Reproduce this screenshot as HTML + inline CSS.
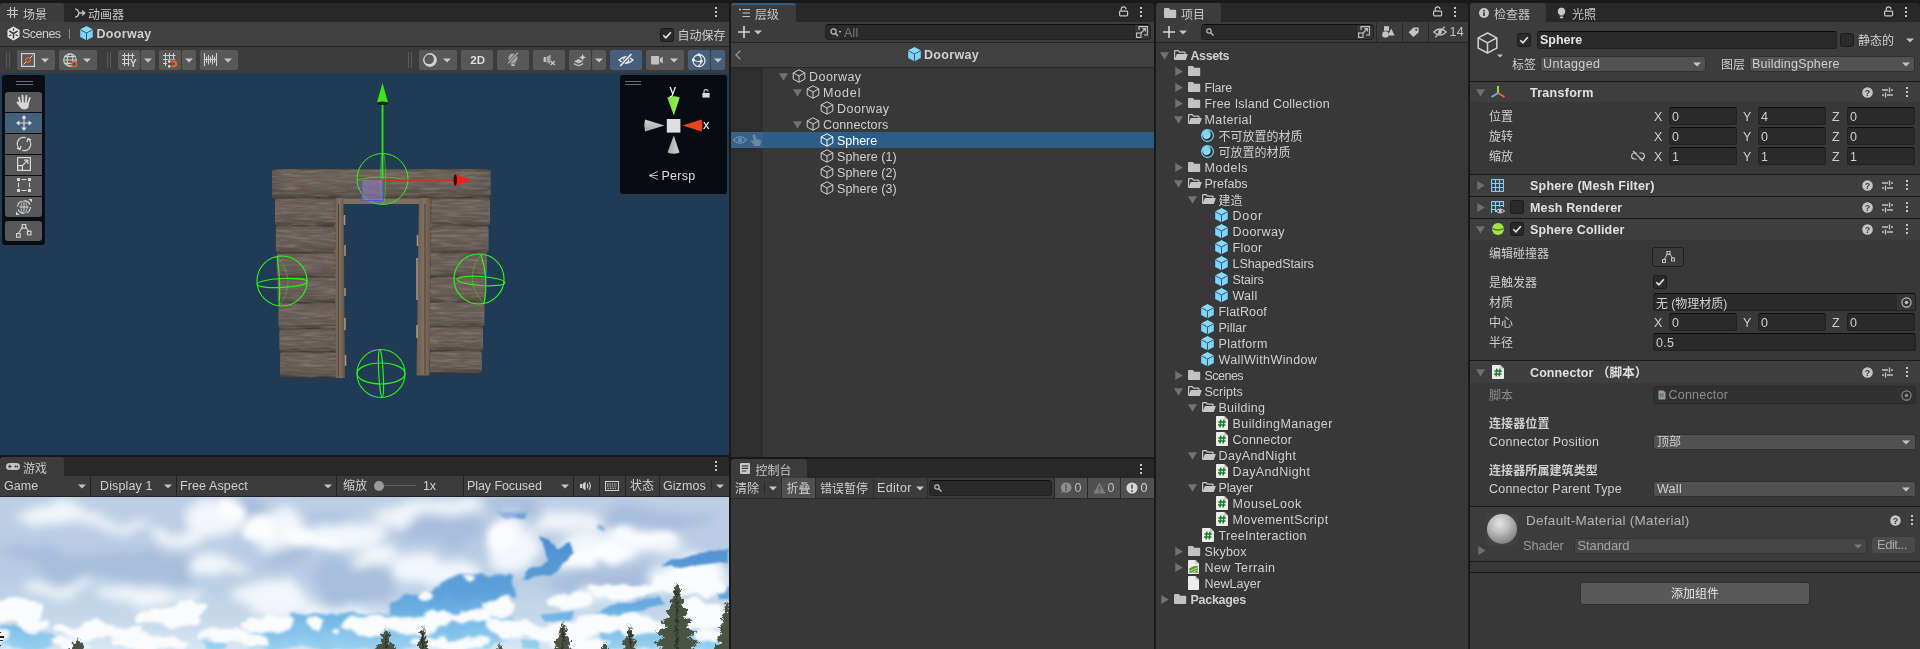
<!DOCTYPE html>
<html lang="zh"><head><meta charset="utf-8"><title>Unity</title>
<style>
*{box-sizing:border-box;margin:0;padding:0}
html,body{width:1920px;height:649px;overflow:hidden;background:#191919}
body{position:relative;font-family:"Liberation Sans","Noto Sans CJK SC",sans-serif;font-size:12.5px;letter-spacing:.25px;color:#cfcfcf;line-height:16px}
#root{position:absolute;left:0;top:0;width:1920px;height:649px;will-change:transform}
.a{position:absolute}
.t{position:absolute;white-space:nowrap;height:16px;line-height:16px}
.c{font-size:12px;letter-spacing:0}
.b{font-weight:bold;letter-spacing:.1px}
.dim{color:#8c8c8c}
svg{display:block;overflow:visible}
.fld{position:absolute;background:#2a2a2a;border:1px solid #212121;border-top-color:#0d0d0d;border-radius:3px}
.dd{position:absolute;background:#515151;border:1px solid #303030;border-radius:3px}
.btn{position:absolute;background:#585858;border-radius:2px}
.btn.on{background:#46607c}
</style></head><body>
<div id="root"><div class="a" style="left:0px;top:3px;width:729px;height:19px;background:#282828;border-radius:3px 3px 0 0"></div>
<div class="a" style="left:0px;top:3px;width:64px;height:19px;background:#3c3c3c;border-radius:3px 3px 0 0"></div>
<svg class="a" style="left:7px;top:7px" width="11" height="11" viewBox="0 0 11 11" ><g stroke="#c4c4c4" stroke-width="1.2"><path d="M3.5 0V11M7.5 0V11M0 3.5H11M0 7.5H11"/></g></svg>
<div class="t c" style="left:23px;top:6.5px;color:#c8c8c8;">场景</div>
<svg class="a" style="left:74px;top:8px" width="12" height="10" viewBox="0 0 12 10" ><g stroke="#c4c4c4" stroke-width="1.3" fill="none"><path d="M1 0.8Q4 1 5 5Q4 9 1 9.2M5 5H10.5M8 2.5L10.8 5L8 7.5"/></g></svg>
<div class="t c" style="left:88px;top:6.5px;color:#c8c8c8;">动画器</div>
<svg class="a" style="left:715px;top:6.5px" width="2" height="10" viewBox="0 0 2 10" ><rect x="0" y="0" width="2" height="2" fill="#c4c4c4"/><rect x="0" y="4" width="2" height="2" fill="#c4c4c4"/><rect x="0" y="8" width="2" height="2" fill="#c4c4c4"/></svg>
<div class="a" style="left:0px;top:22px;width:729px;height:24px;background:#404040"></div>
<div class="a" style="left:0px;top:46px;width:729px;height:1px;background:#232323"></div>
<svg class="a" style="left:7px;top:25.5px" width="13" height="15" viewBox="0 0 13 15" ><path d="M6.5 0.5L12.5 4V11L6.5 14.5L0.5 11V4Z" fill="#e6e6e6"/><path d="M6.5 7.5V12.5M6.5 7.5L2.3 5M6.5 7.5L10.7 5" stroke="#404040" stroke-width="1.6" fill="none"/><path d="M6.5 2.2V5M2 10L4.4 8.6M11 10L8.6 8.6" stroke="#404040" stroke-width="1.2"/></svg>
<div class="t " style="left:22px;top:26px;;letter-spacing:-0.52px;">Scenes</div>
<div class="a" style="left:69px;top:29px;width:1px;height:10px;background:#8a8a8a"></div>
<svg class="a" style="left:80px;top:25.8px" width="13.0" height="14.5" viewBox="0 0 13 14.5" ><path d="M6.5 0.2L12.8 3.6V10.9L6.5 14.3L0.2 10.9V3.6Z" fill="#7ad4fb"/><path d="M6.5 0.2L12.8 3.6L6.5 7L0.2 3.6Z" fill="#86dbfd"/><path d="M0.2 3.6L6.5 7L12.8 3.6M6.5 7V14.3" stroke="#35454f" stroke-width="0.9" fill="none"/></svg>
<div class="t b" style="left:96.5px;top:26px;;letter-spacing:0.32px;">Doorway</div>
<svg class="a" style="left:660px;top:28px" width="14" height="14" viewBox="0 0 14 14" ><rect x="0.5" y="0.5" width="13" height="13" rx="2" fill="#2a2a2a" stroke="#1b1b1b"/><path d="M3.3 7.2L5.9 9.8L10.8 4.2" fill="none" stroke="#e6e6e6" stroke-width="1.6"/></svg>
<div class="t c" style="left:677.5px;top:27.5px;;">自动保存</div>
<div class="a" style="left:0px;top:47px;width:729px;height:26px;background:#3c3c3c"></div>
<div class="a" style="left:6px;top:52px;width:1px;height:16px;background:#5a5a5a"></div>
<div class="a" style="left:9px;top:52px;width:1px;height:16px;background:#5a5a5a"></div>
<div class="a" style="left:107px;top:52px;width:1px;height:16px;background:#5a5a5a"></div>
<div class="a" style="left:110px;top:52px;width:1px;height:16px;background:#5a5a5a"></div>
<div class="a" style="left:408px;top:52px;width:1px;height:16px;background:#5a5a5a"></div>
<div class="a" style="left:411px;top:52px;width:1px;height:16px;background:#5a5a5a"></div>
<div class="btn" style="left:17px;top:50px;width:38px;height:20px"></div>
<div class="btn" style="left:59px;top:50px;width:38px;height:20px"></div>
<div class="btn" style="left:118px;top:50px;width:22px;height:20px"></div>
<div class="btn" style="left:141px;top:50px;width:14px;height:20px"></div>
<div class="btn" style="left:159px;top:50px;width:22px;height:20px"></div>
<div class="btn" style="left:182px;top:50px;width:14px;height:20px"></div>
<div class="btn" style="left:200px;top:50px;width:38px;height:20px"></div>
<div class="btn" style="left:419px;top:50px;width:38px;height:20px"></div>
<div class="btn" style="left:461px;top:50px;width:32px;height:20px"></div>
<div class="btn" style="left:497px;top:50px;width:32px;height:20px"></div>
<div class="btn" style="left:533px;top:50px;width:32px;height:20px"></div>
<div class="btn" style="left:569px;top:50px;width:22px;height:20px"></div>
<div class="btn" style="left:592px;top:50px;width:14px;height:20px"></div>
<div class="btn on" style="left:610px;top:50px;width:32px;height:20px"></div>
<div class="btn" style="left:646px;top:50px;width:38px;height:20px"></div>
<div class="btn on" style="left:688px;top:50px;width:22px;height:20px"></div>
<div class="btn on" style="left:711px;top:50px;width:14px;height:20px"></div>
<svg class="a" style="left:41px;top:58.0px" width="8" height="5" viewBox="0 0 8 5" ><path d="M0 0.5H8L4 4.5Z" fill="#c8c8c8"/></svg>
<svg class="a" style="left:83px;top:58.0px" width="8" height="5" viewBox="0 0 8 5" ><path d="M0 0.5H8L4 4.5Z" fill="#c8c8c8"/></svg>
<svg class="a" style="left:144px;top:58.0px" width="8" height="5" viewBox="0 0 8 5" ><path d="M0 0.5H8L4 4.5Z" fill="#c8c8c8"/></svg>
<svg class="a" style="left:185px;top:58.0px" width="8" height="5" viewBox="0 0 8 5" ><path d="M0 0.5H8L4 4.5Z" fill="#c8c8c8"/></svg>
<svg class="a" style="left:224px;top:58.0px" width="8" height="5" viewBox="0 0 8 5" ><path d="M0 0.5H8L4 4.5Z" fill="#c8c8c8"/></svg>
<svg class="a" style="left:443px;top:58.0px" width="8" height="5" viewBox="0 0 8 5" ><path d="M0 0.5H8L4 4.5Z" fill="#c8c8c8"/></svg>
<svg class="a" style="left:595px;top:58.0px" width="8" height="5" viewBox="0 0 8 5" ><path d="M0 0.5H8L4 4.5Z" fill="#c8c8c8"/></svg>
<svg class="a" style="left:670px;top:58.0px" width="8" height="5" viewBox="0 0 8 5" ><path d="M0 0.5H8L4 4.5Z" fill="#c8c8c8"/></svg>
<svg class="a" style="left:714px;top:58.0px" width="8" height="5" viewBox="0 0 8 5" ><path d="M0 0.5H8L4 4.5Z" fill="#c8c8c8"/></svg>
<svg class="a" style="left:21px;top:53px" width="14" height="14" viewBox="0 0 14 14" ><rect x="0.6" y="0.6" width="12.8" height="12.8" fill="none" stroke="#d0d0d0" stroke-width="1.2"/><path d="M2.5 11.5L11.5 2.5" stroke="#d0d0d0" stroke-width="1"/><circle cx="7" cy="7" r="2.3" fill="#585858" stroke="#f0632a" stroke-width="1.3"/></svg>
<svg class="a" style="left:63px;top:53px" width="15" height="15" viewBox="0 0 15 15" ><g fill="none" stroke="#d0d0d0" stroke-width="1.1"><circle cx="7" cy="7" r="6.3"/><ellipse cx="7" cy="7" rx="2.8" ry="6.3"/><path d="M0.7 7H13.3M1.6 3.6H12.4M1.6 10.4H12.4"/></g><circle cx="11.2" cy="11.2" r="2.5" fill="#585858" stroke="#f0632a" stroke-width="1.3"/></svg>
<svg class="a" style="left:121px;top:52px" width="16" height="16" viewBox="0 0 16 16" ><g stroke="#d0d0d0" stroke-width="1" fill="none"><path d="M3.5 1V14M7.5 1V14M11.5 1V8M1 3.5H13.5M1 7.5H13.5M1 11.5H9"/></g><rect x="8.6" y="6.9" width="7" height="8.6" fill="#585858"/><text x="8.7" y="15" font-size="10.5" font-weight="bold" fill="#d0d0d0" font-family="Liberation Sans,sans-serif" letter-spacing="0">Y</text></svg>
<svg class="a" style="left:162px;top:52px" width="16" height="16" viewBox="0 0 16 16" ><g stroke="#d0d0d0" stroke-width="1" fill="none"><path d="M3.5 1V14M7.5 1V8M11.5 1V8M1 3.5H13.5M1 7.5H13.5M1 11.5H5"/></g><rect x="5.4" y="7.6" width="10.6" height="8.4" fill="#585858"/><path d="M9.4 9.5H11.8A2.3 2.3 0 0 1 11.8 14.3H9.4" fill="none" stroke="#f0632a" stroke-width="1.9"/><rect x="6.2" y="8.4" width="2.1" height="2.1" fill="#fff"/><rect x="6.2" y="13.3" width="2.1" height="2.1" fill="#fff"/></svg>
<svg class="a" style="left:204px;top:53px" width="13" height="13" viewBox="0 0 13 13" ><g stroke="#d0d0d0" stroke-width="1.1"><path d="M0.5 0V13M12.5 0V13M0.5 6.5H12.5M2.5 3.5V9.8M4.5 2V11.5M6.5 3.5V9.8M8.5 2V11.5M10.5 3.5V9.8"/></g></svg>
<svg class="a" style="left:423px;top:53px" width="14" height="14" viewBox="0 0 14 14" ><path fill-rule="evenodd" d="M7 0.3A6.7 6.7 0 1 1 6.99 0.3ZM6 1.3A4.9 4.9 0 1 0 6.01 1.3Z" fill="#d0d0d0"/><circle cx="7" cy="7" r="6.2" fill="none" stroke="#d0d0d0" stroke-width="1"/></svg>
<div class="t b" style="left:470.3px;top:52.3px;font-size:11.5px;letter-spacing:0;color:#dcdcdc;">2D</div>
<svg class="a" style="left:506px;top:52px" width="14" height="16" viewBox="0 0 14 16" ><circle cx="7" cy="6" r="4.6" fill="#a2a2a2"/><path d="M4.6 9H9.4V11.6H4.6Z" fill="#a2a2a2"/><rect x="5" y="12.2" width="4" height="1.7" rx="0.8" fill="#bdbdbd"/><path d="M11.6 1L2.2 11.2" stroke="#585858" stroke-width="2.6"/><path d="M11.8 0.8L2 11.4" stroke="#b8b8b8" stroke-width="1.1"/></svg>
<svg class="a" style="left:543px;top:54px" width="13" height="12" viewBox="0 0 13 12" ><rect x="0.6" y="3" width="2.3" height="5" fill="#c4c4c4"/><path d="M3.6 3L7.6 0.4V10.6L3.6 8Z" fill="#a8a8a8"/><path d="M7 6.4H13V11.6H7Z" fill="#585858"/><path d="M7.6 7L11.8 11M11.8 7L7.6 11" stroke="#c8c8c8" stroke-width="1.3"/></svg>
<svg class="a" style="left:573px;top:53px" width="14" height="14" viewBox="0 0 14 14" ><path d="M1 8.2L5.6 6L10.2 8.2L5.6 10.4Z" fill="#c0c0c0"/><path d="M1 10.6L5.6 12.8L10.2 10.6" fill="none" stroke="#c0c0c0" stroke-width="1.3"/><path d="M9.6 0.2L10.8 3.2L13.8 4.4L10.8 5.6L9.6 8.6L8.4 5.6L5.4 4.4L8.4 3.2Z" fill="#d0d0d0" stroke="#585858" stroke-width="0.6"/></svg>
<svg class="a" style="left:618px;top:53px" width="16" height="14" viewBox="0 0 16 14" ><path d="M1 7Q8 0.4 15 7Q8 13.6 1 7Z" fill="none" stroke="#f0f0f0" stroke-width="1.3"/><path d="M10.2 5.6A2.6 2.6 0 1 1 6.6 4.9" fill="none" stroke="#f0f0f0" stroke-width="1.2"/><path d="M2.4 12.8L13.2 1.2" stroke="#46607c" stroke-width="3.4"/><path d="M2.2 13L13.4 1" stroke="#f0f0f0" stroke-width="1.5"/></svg>
<svg class="a" style="left:651px;top:56px" width="13" height="9" viewBox="0 0 13 9" ><rect x="0" y="0" width="8.2" height="8.4" rx="0.8" fill="#c0c0c0"/><path d="M9 2.6L11.8 0.8V7.6L9 5.8Z" fill="#c0c0c0"/></svg>
<svg class="a" style="left:692px;top:53px" width="14" height="15" viewBox="0 0 14 15" ><g fill="none" stroke="#f0f0f0" stroke-width="1.2"><circle cx="7" cy="7.6" r="6"/><path d="M7 1.6Q9.6 4 9.4 8M1.2 6.8Q5 9.4 9.4 8M9.4 8Q9 11.4 6 13.4"/></g><circle cx="7" cy="1.8" r="1.5" fill="#f0f0f0"/><circle cx="9.4" cy="8" r="1.5" fill="#f0f0f0"/><circle cx="1.4" cy="6.8" r="1.5" fill="#f0f0f0"/></svg>
<div class="a" style="left:0px;top:73px;width:729px;height:382px;background:#223b54"></div>
<svg class="a" style="left:0;top:73px" width="729" height="382" viewBox="0 73 729 382"><defs>
<linearGradient id="lg" x1="0" y1="0" x2="0" y2="1"><stop offset="0" stop-color="#51463f"/><stop offset="0.07" stop-color="#776a62"/><stop offset="0.45" stop-color="#7b6f67"/><stop offset="0.8" stop-color="#6d625b"/><stop offset="0.95" stop-color="#564b45"/><stop offset="1" stop-color="#3e3530"/></linearGradient>
<linearGradient id="lg2" x1="0" y1="0" x2="0" y2="1"><stop offset="0" stop-color="#5a4f47"/><stop offset="0.1" stop-color="#7d7168"/><stop offset="0.5" stop-color="#786c64"/><stop offset="0.85" stop-color="#665b54"/><stop offset="1" stop-color="#443b35"/></linearGradient>
<linearGradient id="post" x1="0" y1="0" x2="1" y2="0"><stop offset="0" stop-color="#6e5e50"/><stop offset="0.5" stop-color="#80705f"/><stop offset="1" stop-color="#625446"/></linearGradient>
<linearGradient id="sh" x1="0" y1="0" x2="1" y2="0"><stop offset="0" stop-color="#000" stop-opacity="0.12"/><stop offset="0.08" stop-color="#000" stop-opacity="0"/><stop offset="0.92" stop-color="#000" stop-opacity="0"/><stop offset="1" stop-color="#000" stop-opacity="0.15"/></linearGradient>
<filter id="wood" x="0" y="0" width="100%" height="100%"><feTurbulence type="fractalNoise" baseFrequency="0.035 0.55" numOctaves="3" seed="11" result="n"/><feColorMatrix in="n" type="matrix" values="0 0 0 0 0.12  0 0 0 0 0.1  0 0 0 0 0.09  1.3 0 0 0 -0.5" result="d"/><feComposite in="d" in2="SourceGraphic" operator="in"/></filter>
<filter id="wood2" x="0" y="0" width="100%" height="100%"><feTurbulence type="fractalNoise" baseFrequency="0.05 0.4" numOctaves="2" seed="23" result="n"/><feColorMatrix in="n" type="matrix" values="0 0 0 0 0.75  0 0 0 0 0.7  0 0 0 0 0.64  0 1.5 0 0 -0.6" result="d"/><feComposite in="d" in2="SourceGraphic" operator="in"/></filter>
</defs><rect x="272" y="169" width="218.5" height="29.5" rx="3.5" fill="url(#lg2)"/><rect x="272" y="169" width="218.5" height="29.5" rx="3.5" fill="url(#sh)"/><rect x="275.0" y="198" width="61.0" height="28" rx="3" fill="url(#lg)"/><rect x="275.9" y="226" width="60.1" height="27" rx="3" fill="url(#lg)"/><rect x="276.8" y="253" width="59.2" height="24" rx="3" fill="url(#lg)"/><rect x="277.6" y="277" width="58.4" height="26" rx="3" fill="url(#lg)"/><rect x="278.5" y="303" width="57.5" height="26" rx="3" fill="url(#lg)"/><rect x="279.4" y="329" width="56.6" height="23" rx="3" fill="url(#lg)"/><rect x="280.2" y="352" width="55.8" height="25.5" rx="3" fill="url(#lg)"/><rect x="430" y="198" width="60.0" height="28" rx="3" fill="url(#lg)"/><rect x="430" y="226" width="58.5" height="27" rx="3" fill="url(#lg)"/><rect x="430" y="253" width="57.0" height="24" rx="3" fill="url(#lg)"/><rect x="430" y="277" width="55.7" height="25" rx="3" fill="url(#lg)"/><rect x="430" y="302" width="54.4" height="25" rx="3" fill="url(#lg)"/><rect x="430" y="327" width="53.0" height="24" rx="3" fill="url(#lg)"/><rect x="430" y="351" width="51.7" height="22" rx="3" fill="url(#lg)"/><rect x="334" y="197" width="98" height="7" fill="#7d6f62"/><rect x="334" y="197" width="98" height="1.5" fill="#4a4039"/><path d="M334 198H343.5L345 378H335.5Z" fill="url(#post)"/><path d="M419 198H432L429.5 375.5H416.5Z" fill="url(#post)"/><path d="M338.5 204V377M425 204V375" stroke="#4d4239" stroke-width="1"/><path d="M344.5 215V225M345 245V256M345 288V296M345 318V330M345.5 355V366M417.5 235V246M417 258V300M417 325V338" stroke="#c9a98a" stroke-width="1.6" opacity="0.8"/><g fill="#2a1c12" opacity="0.2"><path d="M272 169H490.5V198.5H490L480.5 373H430V198H336V377.5H281L275 198.5H272Z"/></g><g filter="url(#wood)" fill="#000"><path d="M272 169H490.5V198.5H490L480.5 373H430V198H336V377.5H281L275 198.5H272Z"/></g><g filter="url(#wood2)" fill="#000" opacity="0.3"><path d="M272 169H490.5V198.5H490L480.5 373H430V198H336V377.5H281L275 198.5H272Z"/></g><circle cx="382.5" cy="179" r="25.5" fill="none" stroke="#2cf21c" stroke-width="1"/><path d="M357 180Q382 174 408 180" fill="none" stroke="#2cf21c" stroke-width="0.9" opacity="0.8"/><ellipse cx="383" cy="179" rx="2.6" ry="25.5" fill="none" stroke="#2cf21c" stroke-width="0.8" opacity="0.7"/><rect x="362" y="179.5" width="21" height="21" fill="#8a7fc0" fill-opacity="0.6" stroke="#4b55e0" stroke-width="0.9"/><path d="M382.5 179V102" stroke="#35e61e" stroke-width="1.8"/><path d="M382.5 83L388.2 103H376.8Z" fill="#3fe51c"/><ellipse cx="382.5" cy="103.2" rx="5.8" ry="1.8" fill="#0c2a08"/><path d="M383 180H456" stroke="#e8281c" stroke-width="1.6"/><path d="M471 180L455.5 174.2V185.8Z" fill="#f2210f"/><ellipse cx="455.3" cy="180" rx="1.7" ry="5.8" fill="#3a0a06"/><circle cx="282" cy="281" r="25" fill="none" stroke="#2cf21c" stroke-width="1.1"/><ellipse cx="282" cy="283" rx="25" ry="4.5" fill="none" stroke="#2cf21c" stroke-width="1.2" transform="rotate(-3 282 283)"/><path d="M277 256.5Q281 281 279 306" fill="none" stroke="#2cf21c" stroke-width="1.2"/><path d="M277 256.5Q298 281 279 306" fill="none" stroke="#2cf21c" stroke-width="0.7" opacity="0.6"/><circle cx="479" cy="279" r="25" fill="none" stroke="#2cf21c" stroke-width="1.2"/><ellipse cx="481" cy="281" rx="24" ry="4.5" fill="none" stroke="#2cf21c" stroke-width="1.2" transform="rotate(4 481 281)"/><path d="M481 254.5Q489 279 484 304" fill="none" stroke="#2cf21c" stroke-width="1.2"/><path d="M481 254.5Q462 279 484 304" fill="none" stroke="#2cf21c" stroke-width="0.7" opacity="0.6"/><circle cx="381" cy="373.5" r="24" fill="none" stroke="#2cf21c" stroke-width="1.1"/><ellipse cx="381" cy="373.5" rx="24" ry="10.5" fill="none" stroke="#2cf21c" stroke-width="1.2"/><ellipse cx="381" cy="373.5" rx="2.2" ry="24" fill="none" stroke="#2cf21c" stroke-width="1.1" transform="rotate(-3 381 373.5)"/></svg>
<div class="a" style="left:2px;top:75px;width:43px;height:170px;background:#0a0d13;border-radius:3px"></div>
<div class="a" style="left:16px;top:81px;width:17px;height:1px;background:#6a6a6a"></div>
<div class="a" style="left:16px;top:84px;width:17px;height:1px;background:#6a6a6a"></div>
<div class="a" style="left:5px;top:92px;width:37px;height:20px;background:#585858;border-radius:3px 3px 0 0"></div>
<div class="a" style="left:5px;top:113px;width:37px;height:20px;background:#46607c;border-radius:0"></div>
<div class="a" style="left:5px;top:134px;width:37px;height:20px;background:#585858;border-radius:0"></div>
<div class="a" style="left:5px;top:155px;width:37px;height:20px;background:#585858;border-radius:0"></div>
<div class="a" style="left:5px;top:176px;width:37px;height:20px;background:#585858;border-radius:0"></div>
<div class="a" style="left:5px;top:197px;width:37px;height:20px;background:#585858;border-radius:0 0 3px 3px"></div>
<div class="a" style="left:5px;top:221px;width:37px;height:20px;background:#585858;border-radius:3px"></div>
<svg class="a" style="left:16px;top:94px" width="15" height="16" viewBox="0 0 15 16" ><g fill="#d6d6d6"><rect x="3.6" y="2.6" width="1.9" height="8" rx="0.95" transform="rotate(-14 4.6 10)"/><rect x="6.1" y="0.8" width="1.9" height="9.4" rx="0.95" transform="rotate(-4 7 10)"/><rect x="8.6" y="1" width="1.9" height="9.4" rx="0.95" transform="rotate(6 9.5 10)"/><rect x="11" y="2.8" width="1.8" height="7.6" rx="0.9" transform="rotate(17 11.9 10)"/><path d="M3.8 8.4H12.8V10.8Q12.8 15.4 8.4 15.4Q5.6 15.4 4.3 13.4L0.7 8.9Q0.2 7.9 1.2 7.4Q2.1 7.1 2.8 7.9L3.8 9.2Z"/></g></svg>
<svg class="a" style="left:16px;top:115px" width="16" height="16" viewBox="0 0 16 16" ><g stroke="#d6d6d6" stroke-width="1.2" fill="none"><path d="M8 2V14M2 8H14"/></g><path d="M8 0L10.6 3.4H5.4ZM8 16L10.6 12.6H5.4ZM0 8L3.4 5.4V10.6ZM16 8L12.6 5.4V10.6Z" fill="#dfe6ee"/></svg>
<svg class="a" style="left:16px;top:136px" width="16" height="16" viewBox="0 0 16 16" ><g stroke="#d6d6d6" stroke-width="1.25" fill="none"><path d="M9.6 1.7A6.4 6.4 0 0 0 3.8 12.9M6.4 14.3A6.4 6.4 0 0 0 12.2 3.1"/><path d="M0.9 12.2L4.1 13.4L5 10M15.1 3.8L11.9 2.6L11 6"/></g></svg>
<svg class="a" style="left:17px;top:157px" width="14" height="14" viewBox="0 0 14 14" ><g stroke="#d6d6d6" stroke-width="1.2" fill="none"><rect x="0.6" y="0.6" width="12.8" height="12.8"/><rect x="0.6" y="8.6" width="4.8" height="4.8"/><path d="M5.5 8.5L10.8 3.2M7 3.2H10.8V7"/></g></svg>
<svg class="a" style="left:17px;top:178px" width="14" height="14" viewBox="0 0 14 14" ><g stroke="#d6d6d6" stroke-width="1.1" fill="none"><path d="M4.5 1.5H9.5M4.5 12.5H9.5M1.5 4.5V9.5M12.5 4.5V9.5"/></g><g fill="#d6d6d6"><rect x="0" y="0" width="3" height="3"/><rect x="11" y="0" width="3" height="3"/><rect x="0" y="11" width="3" height="3"/><rect x="11" y="11" width="3" height="3"/></g></svg>
<svg class="a" style="left:16px;top:199px" width="16" height="16" viewBox="0 0 16 16" ><g stroke="#d6d6d6" stroke-width="1.1" fill="none"><circle cx="8" cy="8" r="6.4" stroke-dasharray="7 3"/><path d="M8 3.5V12.5M3.5 8H12.5"/><ellipse cx="8" cy="8" rx="3" ry="6.2" stroke-width="0.8"/></g><path d="M16 0V3.6L12.4 0ZM0 16V12.4L3.6 16Z" fill="#d6d6d6"/></svg>
<svg class="a" style="left:16px;top:224px" width="16" height="14" viewBox="0 0 16 14" ><g stroke="#d6d6d6" stroke-width="1.1" fill="none"><path d="M2.4 9.5L6.6 2.8M9.4 2.8L13.2 8"/><rect x="6.2" y="0.6" width="3.6" height="3.6"/><rect x="0.6" y="9.6" width="3.6" height="3.6"/><rect x="11.4" y="7.2" width="3.6" height="3.6"/></g></svg>
<div class="a" style="left:620px;top:75px;width:107px;height:119px;background:#080b12;border-radius:3px"></div>
<div class="a" style="left:625px;top:81px;width:16px;height:1px;background:#6a6a6a"></div>
<div class="a" style="left:625px;top:84px;width:16px;height:1px;background:#6a6a6a"></div>
<svg class="a" style="left:0;top:73px" width="729" height="382" viewBox="0 73 729 382"><defs><linearGradient id="cg" x1="0" y1="0" x2="1" y2="0"><stop offset="0" stop-color="#7ee03a"/><stop offset="1" stop-color="#9aee5a"/></linearGradient><linearGradient id="cgy" x1="0" y1="0" x2="1" y2="0"><stop offset="0" stop-color="#a8a8a8"/><stop offset="1" stop-color="#d0d0d0"/></linearGradient><linearGradient id="cgx" x1="0" y1="0" x2="0" y2="1"><stop offset="0" stop-color="#d0d0d0"/><stop offset="1" stop-color="#a8a8a8"/></linearGradient></defs><path d="M667.3 97.5Q673.5 95 679.7 97.5L673.8 115.5Z" fill="url(#cg)"/><path d="M667.5 152.5Q673.5 155 679.5 152.5L673.8 135.5Z" fill="url(#cgy)"/><path d="M645 119.6Q643.5 125.5 645 131.4L664.5 125.6Z" fill="url(#cgx)"/><path d="M701.5 119.6Q703.5 125.5 701.5 131.4L682.5 125.6Z" fill="#e8431f"/><rect x="666.8" y="119" width="13.6" height="13.6" fill="#dedede"/><path d="M649 175.5L658 171.5M649 175.5L658 179.5M649 175.5H658" stroke="#c8c8c8" stroke-width="0.9" fill="none"/></svg>
<div class="t " style="left:669.5px;top:81.5px;color:#fff;font-size:13px;">y</div>
<div class="t " style="left:703px;top:116.5px;color:#fff;font-size:13px;">x</div>
<div class="t " style="left:661.5px;top:168px;color:#dcdcdc;">Persp</div>
<svg class="a" style="left:702px;top:89px" width="8" height="9" viewBox="0 0 8 9" ><path d="M2 4V2.6Q2 0.6 4 0.6Q6 0.6 6 2.6" fill="none" stroke="#d0d0d0" stroke-width="1.1"/><rect x="0.4" y="4" width="7.2" height="4.6" fill="#d8d8d8"/></svg>
<div class="a" style="left:0px;top:457px;width:729px;height:19px;background:#282828;border-radius:3px 3px 0 0"></div>
<div class="a" style="left:0px;top:457px;width:64px;height:19px;background:#3c3c3c;border-radius:3px 3px 0 0"></div>
<svg class="a" style="left:6px;top:462px" width="14" height="9" viewBox="0 0 14 9" ><rect x="0" y="1" width="14" height="7" rx="3.5" fill="#c4c4c4"/><path d="M3.8 2.8V6.2M2.1 4.5H5.5" stroke="#3c3c3c" stroke-width="1.1"/><circle cx="9.3" cy="4.5" r="0.9" fill="#3c3c3c"/><circle cx="11.3" cy="4.5" r="0.9" fill="#3c3c3c"/></svg>
<div class="t c" style="left:23px;top:460.5px;color:#c8c8c8;">游戏</div>
<svg class="a" style="left:715px;top:460.5px" width="2" height="10" viewBox="0 0 2 10" ><rect x="0" y="0" width="2" height="2" fill="#c4c4c4"/><rect x="0" y="4" width="2" height="2" fill="#c4c4c4"/><rect x="0" y="8" width="2" height="2" fill="#c4c4c4"/></svg>
<div class="a" style="left:0px;top:476px;width:729px;height:20px;background:#3c3c3c"></div>
<div class="a" style="left:0px;top:496px;width:729px;height:1px;background:#1f1f1f"></div>
<div class="a" style="left:90px;top:476px;width:1px;height:20px;background:#242424"></div>
<div class="a" style="left:176px;top:476px;width:1px;height:20px;background:#242424"></div>
<div class="a" style="left:336px;top:476px;width:1px;height:20px;background:#242424"></div>
<div class="a" style="left:463px;top:476px;width:1px;height:20px;background:#242424"></div>
<div class="a" style="left:573px;top:476px;width:1px;height:20px;background:#242424"></div>
<div class="a" style="left:599px;top:476px;width:1px;height:20px;background:#242424"></div>
<div class="a" style="left:625px;top:476px;width:1px;height:20px;background:#242424"></div>
<div class="a" style="left:659px;top:476px;width:1px;height:20px;background:#242424"></div>
<div class="a" style="left:711px;top:480px;width:1px;height:12px;background:#2a2a2a"></div>
<div class="t " style="left:4px;top:477.5px;;letter-spacing:0.05px;">Game</div>
<svg class="a" style="left:78px;top:483.5px" width="8" height="5" viewBox="0 0 8 5" ><path d="M0 0.5H8L4 4.5Z" fill="#c4c4c4"/></svg>
<div class="t " style="left:100px;top:477.5px;;letter-spacing:0.12px;">Display 1</div>
<svg class="a" style="left:164px;top:483.5px" width="8" height="5" viewBox="0 0 8 5" ><path d="M0 0.5H8L4 4.5Z" fill="#c4c4c4"/></svg>
<div class="t " style="left:180px;top:477.5px;;letter-spacing:0.11px;">Free Aspect</div>
<svg class="a" style="left:324px;top:483.5px" width="8" height="5" viewBox="0 0 8 5" ><path d="M0 0.5H8L4 4.5Z" fill="#c4c4c4"/></svg>
<div class="t c" style="left:343px;top:478px;;">缩放</div>
<div class="a" style="left:378px;top:484.5px;width:38px;height:1px;background:#5e5e5e"></div>
<div class="a" style="left:373.5px;top:481px;width:10px;height:10px;background:#999;border-radius:5px"></div>
<div class="t " style="left:423px;top:477.5px;;letter-spacing:-0.10px;">1x</div>
<div class="t " style="left:467px;top:477.5px;;letter-spacing:-0.08px;">Play Focused</div>
<svg class="a" style="left:561px;top:483.5px" width="8" height="5" viewBox="0 0 8 5" ><path d="M0 0.5H8L4 4.5Z" fill="#c4c4c4"/></svg>
<svg class="a" style="left:580px;top:481px" width="12" height="10" viewBox="0 0 12 10" ><path d="M0 3H2V7H0ZM2.6 3L5.6 0.6V9.4L2.6 7Z" fill="#d0d0d0"/><path d="M7.2 2.6Q8.6 5 7.2 7.4M9 1Q11.6 5 9 9" stroke="#d0d0d0" stroke-width="1.1" fill="none"/></svg>
<svg class="a" style="left:605px;top:481px" width="14" height="10" viewBox="0 0 14 10" ><rect x="0.5" y="0.5" width="13" height="9" fill="none" stroke="#d0d0d0"/><path d="M2 3H12M2 5H12M2.5 7.2H11.5" stroke="#d0d0d0" stroke-width="1.1" stroke-dasharray="1.4 1"/></svg>
<div class="t c" style="left:630px;top:478px;;">状态</div>
<div class="t " style="left:663px;top:477.5px;;letter-spacing:0.06px;">Gizmos</div>
<svg class="a" style="left:716px;top:483.5px" width="8" height="5" viewBox="0 0 8 5" ><path d="M0 0.5H8L4 4.5Z" fill="#c4c4c4"/></svg>
<svg class="a" style="left:0;top:497px" width="729" height="152" viewBox="0 0 729 152"><defs>
<linearGradient id="skyb" x1="0" y1="0" x2="0" y2="1"><stop offset="0" stop-color="#bdcee4"/><stop offset="0.5" stop-color="#b6cbe3"/><stop offset="0.8" stop-color="#c6d9eb"/><stop offset="1" stop-color="#d6e6f3"/></linearGradient>
<linearGradient id="blu" gradientUnits="userSpaceOnUse" x1="0" y1="0" x2="0" y2="152"><stop offset="0" stop-color="#6f9fd2"/><stop offset="0.3" stop-color="#4f8fce"/><stop offset="0.65" stop-color="#5ea3dc"/><stop offset="0.85" stop-color="#7cbde8"/><stop offset="1" stop-color="#9ad2f0"/></linearGradient>
<filter id="b1" x="-20%" y="-20%" width="140%" height="140%"><feTurbulence type="fractalNoise" baseFrequency="0.06" numOctaves="2" seed="4" result="n"/><feDisplacementMap in="SourceGraphic" in2="n" scale="7" xChannelSelector="R" yChannelSelector="G"/><feGaussianBlur stdDeviation="1"/></filter>
<filter id="b2" x="-20%" y="-30%" width="140%" height="160%"><feTurbulence type="fractalNoise" baseFrequency="0.045" numOctaves="3" seed="9" result="n"/><feDisplacementMap in="SourceGraphic" in2="n" scale="16" xChannelSelector="R" yChannelSelector="G"/><feGaussianBlur stdDeviation="1.8"/></filter>
<filter id="b4" x="-20%" y="-30%" width="140%" height="160%"><feTurbulence type="fractalNoise" baseFrequency="0.03" numOctaves="3" seed="2" result="n"/><feDisplacementMap in="SourceGraphic" in2="n" scale="22" xChannelSelector="R" yChannelSelector="G"/><feGaussianBlur stdDeviation="3.5"/></filter>
<filter id="b8" x="-20%" y="-40%" width="140%" height="180%"><feTurbulence type="fractalNoise" baseFrequency="0.025" numOctaves="3" seed="5" result="n"/><feDisplacementMap in="SourceGraphic" in2="n" scale="30" xChannelSelector="R" yChannelSelector="G"/><feGaussianBlur stdDeviation="5.5"/></filter>
<filter id="tr" x="-20%" y="-20%" width="140%" height="140%"><feTurbulence type="fractalNoise" baseFrequency="0.35" numOctaves="2" seed="3" result="n"/><feDisplacementMap in="SourceGraphic" in2="n" scale="7" xChannelSelector="R" yChannelSelector="G"/></filter><clipPath id="skc"><rect x="0" y="0" width="729" height="152"/></clipPath>
</defs><g clip-path="url(#skc)"><rect width="729" height="152" fill="url(#skyb)"/><g filter="url(#b8)" fill="#a7bedc"><ellipse cx="130" cy="72" rx="100" ry="12"/><ellipse cx="40" cy="60" rx="40" ry="9"/><ellipse cx="250" cy="12" rx="12" ry="14"/><ellipse cx="290" cy="62" rx="20" ry="10"/><ellipse cx="352" cy="84" rx="38" ry="22"/><ellipse cx="440" cy="34" rx="46" ry="11"/><ellipse cx="508" cy="8" rx="24" ry="9"/><ellipse cx="650" cy="20" rx="70" ry="9"/><ellipse cx="620" cy="88" rx="70" ry="16"/><ellipse cx="335" cy="20" rx="22" ry="7"/></g><g filter="url(#b8)" fill="#f3f7fb"><ellipse cx="65" cy="18" rx="45" ry="9"/><ellipse cx="215" cy="22" rx="30" ry="22"/><ellipse cx="278" cy="30" rx="26" ry="22"/><ellipse cx="345" cy="40" rx="48" ry="13"/><ellipse cx="450" cy="12" rx="38" ry="9"/><ellipse cx="270" cy="100" rx="32" ry="18"/><ellipse cx="435" cy="74" rx="50" ry="16"/><ellipse cx="372" cy="62" rx="18" ry="9"/><ellipse cx="515" cy="48" rx="24" ry="26"/><ellipse cx="620" cy="48" rx="62" ry="14"/><ellipse cx="690" cy="80" rx="36" ry="18"/><ellipse cx="570" cy="22" rx="40" ry="12"/><ellipse cx="600" cy="100" rx="30" ry="6"/><ellipse cx="330" cy="118" rx="60" ry="8"/><ellipse cx="180" cy="40" rx="30" ry="8"/><ellipse cx="120" cy="30" rx="30" ry="6"/><ellipse cx="215" cy="70" rx="30" ry="10"/><ellipse cx="150" cy="100" rx="50" ry="8"/><ellipse cx="60" cy="90" rx="40" ry="6"/><ellipse cx="400" cy="20" rx="25" ry="10"/></g><g filter="url(#b4)" fill="#fbfcfe"><ellipse cx="640" cy="40" rx="40" ry="7"/><ellipse cx="600" cy="56" rx="36" ry="8"/><ellipse cx="575" cy="68" rx="22" ry="7"/><ellipse cx="500" cy="40" rx="14" ry="16"/><ellipse cx="260" cy="30" rx="14" ry="12"/><ellipse cx="300" cy="40" rx="16" ry="8"/><ellipse cx="690" cy="76" rx="28" ry="10"/><ellipse cx="230" cy="15" rx="12" ry="10"/><ellipse cx="330" cy="45" rx="20" ry="6"/></g><g filter="url(#b2)" fill="url(#blu)"><path d="M392 104L410 99L428 96L440 86L456 81L486 77L514 78L514 97L500 101L490 118L512 122L512 140L490 152H250L248 136L285 128L290 119L345 117L392 119Z"/><path d="M0 126L30 134L52 140L60 152H0Z"/><path d="M118 146L135 144L140 152H120Z"/><path d="M205 147L222 144L226 152H208Z"/></g><g filter="url(#b1)" fill="url(#blu)"><path d="M540 39L548 42L556 52L570 45L572 58L561 70L546 78L523 83L528 74L548 64L544 50Z"/><path d="M660 68L690 58L729 50V64L700 68L680 72Z"/><path d="M594 118L620 106L660 100L665 108L640 113L612 121Z"/><path d="M540 118L575 114L572 123L545 126Z"/><path d="M716 94L729 90V102L720 102Z"/><path d="M520 144L540 142L542 152H522Z"/><path d="M600 134L660 130L729 134V152H600Z"/></g><g filter="url(#b2)"><ellipse cx="512" cy="16" rx="15" ry="5" fill="#90b2da"/><ellipse cx="519" cy="18" rx="6" ry="2.5" fill="#5f95d0"/><ellipse cx="601" cy="32" rx="5" ry="2" fill="#86aedb"/></g><g filter="url(#b2)" fill="#f9fbfd"><ellipse cx="14" cy="113" rx="30" ry="12"/><ellipse cx="34" cy="126" rx="18" ry="7"/><ellipse cx="2" cy="141" rx="7" ry="9"/><ellipse cx="100" cy="134" rx="46" ry="8"/><ellipse cx="150" cy="146" rx="40" ry="8"/><ellipse cx="70" cy="148" rx="20" ry="6"/><ellipse cx="168" cy="120" rx="32" ry="10"/><ellipse cx="192" cy="112" rx="18" ry="8"/><ellipse cx="226" cy="139" rx="26" ry="8"/><ellipse cx="140" cy="142" rx="18" ry="5"/><ellipse cx="268" cy="127" rx="28" ry="8"/><ellipse cx="252" cy="143" rx="20" ry="7"/><ellipse cx="316" cy="127" rx="7" ry="6"/><ellipse cx="338" cy="134" rx="5" ry="4"/><ellipse cx="370" cy="128" rx="26" ry="9"/><ellipse cx="410" cy="128" rx="28" ry="10"/><ellipse cx="440" cy="121" rx="14" ry="8"/><ellipse cx="424" cy="99" rx="8" ry="5"/><ellipse cx="468" cy="83" rx="8" ry="3"/><ellipse cx="500" cy="110" rx="17" ry="10"/><ellipse cx="498" cy="128" rx="12" ry="7"/><ellipse cx="470" cy="120" rx="22" ry="6"/><ellipse cx="450" cy="146" rx="40" ry="7"/><ellipse cx="560" cy="135" rx="40" ry="9"/><ellipse cx="600" cy="127" rx="28" ry="8"/><ellipse cx="640" cy="128" rx="28" ry="10"/><ellipse cx="700" cy="118" rx="30" ry="14"/><ellipse cx="520" cy="134" rx="20" ry="8"/><ellipse cx="690" cy="88" rx="34" ry="12"/><ellipse cx="628" cy="94" rx="40" ry="7"/><ellipse cx="572" cy="103" rx="24" ry="9"/><ellipse cx="712" cy="140" rx="20" ry="8"/><ellipse cx="580" cy="148" rx="30" ry="6"/></g><g filter="url(#tr)"><path d="M677.0 85.0L677.6 88.0L680.2 93.2L679.6 98.5L684.3 103.7L681.7 108.9L688.4 114.2L683.7 119.4L692.5 124.6L685.8 129.8L696.6 135.1L687.8 140.3L700.6 145.5L689.8 150.8L704.7 156.0L647.8 156.0L663.5 150.8L652.1 145.5L665.6 140.3L656.4 135.1L667.8 129.8L660.7 124.6L669.9 119.4L665.0 114.2L672.1 108.9L669.3 103.7L674.2 98.5L673.6 93.2L676.4 88.0Z" fill="#4a5443"/><path d="M727.0 103.0L727.6 106.0L729.5 111.0L728.9 116.0L732.1 121.0L730.2 126.0L734.8 131.0L731.6 136.0L737.5 141.0L732.9 146.0L740.1 151.0L734.2 156.0L719.4 156.0L713.2 151.0L720.8 146.0L716.0 141.0L722.2 136.0L718.8 131.0L723.6 126.0L721.6 121.0L725.0 116.0L724.4 111.0L726.4 106.0Z" fill="#4a5443"/><path d="M386.0 130.0L386.6 133.0L390.2 138.8L389.7 144.5L396.4 150.2L392.7 156.0L378.9 156.0L375.1 150.2L382.1 144.5L381.6 138.8L385.4 133.0Z" fill="#4a5443"/><path d="M423.0 128.0L423.6 131.0L425.7 136.0L425.1 141.0L428.7 146.0L426.6 151.0L431.7 156.0L413.8 156.0L419.2 151.0L417.0 146.0L420.8 141.0L420.2 136.0L422.4 131.0Z" fill="#4a5443"/><path d="M563.0 124.0L563.6 127.0L566.6 132.8L566.0 138.6L571.5 144.4L568.5 150.2L576.5 156.0L548.8 156.0L557.2 150.2L554.0 144.4L559.8 138.6L559.2 132.8L562.4 127.0Z" fill="#4a5443"/><path d="M630.0 127.0L630.6 130.0L633.0 135.2L632.5 140.4L636.8 145.6L634.4 150.8L640.6 156.0L618.8 156.0L625.4 150.8L622.8 145.6L627.4 140.4L626.8 135.2L629.4 130.0Z" fill="#4a5443"/><path d="M78.0 140.0L78.6 143.0L83.9 147.3L83.3 151.7L93.4 156.0L61.8 156.0L72.4 151.7L71.8 147.3L77.4 143.0Z" fill="#4a5443"/><path d="M500.0 144.0L500.6 147.0L502.7 150.0L502.2 153.0L505.9 156.0L493.8 156.0L497.7 153.0L497.1 150.0L499.4 147.0Z" fill="#4a5443"/><path d="M605.0 144.0L605.6 147.0L608.0 150.0L607.5 153.0L611.8 156.0L597.8 156.0L602.4 153.0L601.8 150.0L604.4 147.0Z" fill="#4a5443"/><path d="M677 95V152M386 138V152M563 132V152M630 134V152M423 135V152" stroke="#2f3629" stroke-width="2.2"/></g></g></svg>
<div class="a" style="left:0px;top:632px;width:1px;height:1px;background:#222"></div>
<div class="a" style="left:0px;top:636px;width:4px;height:2px;background:#1c1c1c"></div>
<div class="a" style="left:0px;top:640px;width:3px;height:1px;background:#333"></div>
<div class="a" style="left:0px;top:645px;width:1px;height:1px;background:#222"></div>
<div class="a" style="left:731px;top:3px;width:423px;height:19px;background:#282828;border-radius:3px 3px 0 0"></div>
<div class="a" style="left:731px;top:3px;width:65px;height:19px;background:#3c3c3c;border-radius:3px 3px 0 0;border-top:2px solid #2c5d87"></div>
<svg class="a" style="left:739px;top:8px" width="11" height="10" viewBox="0 0 11 10" ><g stroke="#c4c4c4" stroke-width="1.2"><path d="M3.5 1.5H11M3.5 5H11M3.5 8.5H11"/><path d="M0 1.5H2M1 0.5V2.5" stroke-width="1"/></g></svg>
<div class="t c" style="left:755px;top:6.5px;color:#c8c8c8;">层级</div>
<svg class="a" style="left:1119.4px;top:6.4px" width="9.4" height="10.6" viewBox="0 0 9.4 10.6" ><path d="M2.2 5V3.2Q2.2 0.8 4.6 0.8Q7 0.8 7 3.2" fill="none" stroke="#c4c4c4" stroke-width="1.2"/><rect x="0.6" y="5.2" width="8" height="4.6" rx="0.8" fill="none" stroke="#c4c4c4" stroke-width="1.2"/></svg>
<svg class="a" style="left:1140px;top:6.5px" width="2" height="10" viewBox="0 0 2 10" ><rect x="0" y="0" width="2" height="2" fill="#c4c4c4"/><rect x="0" y="4" width="2" height="2" fill="#c4c4c4"/><rect x="0" y="8" width="2" height="2" fill="#c4c4c4"/></svg>
<div class="a" style="left:731px;top:22px;width:423px;height:20px;background:#3c3c3c"></div>
<div class="a" style="left:731px;top:42px;width:423px;height:1px;background:#232323"></div>
<svg class="a" style="left:738px;top:26px" width="12" height="12" viewBox="0 0 12 12" ><path d="M6 0V12M0 6H12" stroke="#d6d6d6" stroke-width="1.6"/></svg>
<svg class="a" style="left:754px;top:29.5px" width="8" height="5" viewBox="0 0 8 5" ><path d="M0 0.5H8L4 4.5Z" fill="#c4c4c4"/></svg>
<div class="fld" style="left:825px;top:24px;width:326px;height:16px;border-radius:4px"></div>
<div class="a" style="left:1134px;top:25px;width:16px;height:14px;background:#353535;border-left:1px solid #242424;border-radius:0 3px 3px 0"></div>
<svg class="a" style="left:830px;top:28px" width="12" height="9" viewBox="0 0 12 9" ><circle cx="3.5" cy="3.5" r="2.6" fill="none" stroke="#bdbdbd" stroke-width="1.2"/><path d="M5.4 5.4L8 8" stroke="#bdbdbd" stroke-width="1.4"/><path d="M8.5 3H11.5L10 5Z" fill="#bdbdbd"/></svg>
<div class="t " style="left:844px;top:25px;color:#7a7a7a;">All</div>
<svg class="a" style="left:1136px;top:26px" width="12" height="12" viewBox="0 0 12 12" ><g fill="none" stroke="#c4c4c4" stroke-width="1.1"><path d="M3 4V0.6H11.4V9H8"/><rect x="0.6" y="7" width="4.4" height="4.4"/><path d="M5 7L9.4 2.6M6.4 2.6H9.4V5.6"/></g></svg>
<div class="a" style="left:731px;top:43px;width:423px;height:24px;background:#404040"></div>
<div class="a" style="left:731px;top:67px;width:423px;height:1px;background:#2a2a2a"></div>
<svg class="a" style="left:735px;top:49.5px" width="6" height="10" viewBox="0 0 6 10" ><path d="M5.4 0.6L1 5L5.4 9.4" fill="none" stroke="#9a9a9a" stroke-width="1.3"/></svg>
<svg class="a" style="left:908px;top:47px" width="13.0" height="14.5" viewBox="0 0 13 14.5" ><path d="M6.5 0.2L12.8 3.6V10.9L6.5 14.3L0.2 10.9V3.6Z" fill="#7ad4fb"/><path d="M6.5 0.2L12.8 3.6L6.5 7L0.2 3.6Z" fill="#86dbfd"/><path d="M0.2 3.6L6.5 7L12.8 3.6M6.5 7V14.3" stroke="#35454f" stroke-width="0.9" fill="none"/></svg>
<div class="t b" style="left:924px;top:47px;;letter-spacing:0.32px;">Doorway</div>
<div class="a" style="left:731px;top:68px;width:423px;height:389px;background:#383838"></div>
<div class="a" style="left:731px;top:68px;width:32px;height:389px;background:#2e2e2e"></div>
<div class="a" style="left:731px;top:132px;width:423px;height:16px;background:#2c5d87"></div>
<div class="a" style="left:731px;top:132px;width:32px;height:16px;background:#3a6289"></div>
<svg class="a" style="left:733px;top:135px" width="14" height="10" viewBox="0 0 14 10" ><path d="M0.6 5Q7 -1.6 13.4 5Q7 11.6 0.6 5Z" fill="none" stroke="#6c89a6" stroke-width="1.2"/><circle cx="7" cy="5" r="2.2" fill="#6c89a6"/></svg>
<svg class="a" style="left:750px;top:134px" width="12" height="13" viewBox="0 0 12 13" ><path d="M3.6 0.8Q4.6 0.2 5.2 1.2L6.6 5L10 6Q11.4 6.6 11 8L10 12H5L1 7.4Q0.8 6.2 2 6.4L3.6 7.6L2.6 2Q2.6 1.2 3.6 0.8Z" fill="#6c89a6"/></svg>
<svg class="a" style="left:779.0px;top:73.0px" width="9" height="8" viewBox="0 0 9 8" ><path d="M0 0.3H9L4.5 7.8Z" fill="#727272"/></svg>
<svg class="a" style="left:791.5px;top:69px" width="14" height="14" viewBox="0 0 14 14" ><g fill="none" stroke="#d2d2d2" stroke-width="1" stroke-linejoin="round"><path d="M7 0.8L12.8 3.9V10.1L7 13.2L1.2 10.1V3.9Z"/><path d="M1.2 3.9L7 7L12.8 3.9M7 7V13.2"/></g></svg>
<div class="t " style="left:809px;top:69px;;letter-spacing:0.46px;">Doorway</div>
<svg class="a" style="left:793.0px;top:89.0px" width="9" height="8" viewBox="0 0 9 8" ><path d="M0 0.3H9L4.5 7.8Z" fill="#727272"/></svg>
<svg class="a" style="left:805.5px;top:85px" width="14" height="14" viewBox="0 0 14 14" ><g fill="none" stroke="#d2d2d2" stroke-width="1" stroke-linejoin="round"><path d="M7 0.8L12.8 3.9V10.1L7 13.2L1.2 10.1V3.9Z"/><path d="M1.2 3.9L7 7L12.8 3.9M7 7V13.2"/></g></svg>
<div class="t " style="left:823px;top:85px;;letter-spacing:0.84px;">Model</div>
<svg class="a" style="left:819.5px;top:101px" width="14" height="14" viewBox="0 0 14 14" ><g fill="none" stroke="#d2d2d2" stroke-width="1" stroke-linejoin="round"><path d="M7 0.8L12.8 3.9V10.1L7 13.2L1.2 10.1V3.9Z"/><path d="M1.2 3.9L7 7L12.8 3.9M7 7V13.2"/></g></svg>
<div class="t " style="left:837px;top:101px;;letter-spacing:0.46px;">Doorway</div>
<svg class="a" style="left:793.0px;top:121.0px" width="9" height="8" viewBox="0 0 9 8" ><path d="M0 0.3H9L4.5 7.8Z" fill="#727272"/></svg>
<svg class="a" style="left:805.5px;top:117px" width="14" height="14" viewBox="0 0 14 14" ><g fill="none" stroke="#d2d2d2" stroke-width="1" stroke-linejoin="round"><path d="M7 0.8L12.8 3.9V10.1L7 13.2L1.2 10.1V3.9Z"/><path d="M1.2 3.9L7 7L12.8 3.9M7 7V13.2"/></g></svg>
<div class="t " style="left:823px;top:117px;;letter-spacing:0.14px;">Connectors</div>
<svg class="a" style="left:819.5px;top:133px" width="14" height="14" viewBox="0 0 14 14" ><g fill="none" stroke="#ffffff" stroke-width="1" stroke-linejoin="round"><path d="M7 0.8L12.8 3.9V10.1L7 13.2L1.2 10.1V3.9Z"/><path d="M1.2 3.9L7 7L12.8 3.9M7 7V13.2"/></g></svg>
<div class="t " style="left:837px;top:133px;color:#fff;letter-spacing:-0.02px;">Sphere</div>
<svg class="a" style="left:819.5px;top:149px" width="14" height="14" viewBox="0 0 14 14" ><g fill="none" stroke="#d2d2d2" stroke-width="1" stroke-linejoin="round"><path d="M7 0.8L12.8 3.9V10.1L7 13.2L1.2 10.1V3.9Z"/><path d="M1.2 3.9L7 7L12.8 3.9M7 7V13.2"/></g></svg>
<div class="t " style="left:837px;top:149px;;letter-spacing:0.07px;">Sphere (1)</div>
<svg class="a" style="left:819.5px;top:165px" width="14" height="14" viewBox="0 0 14 14" ><g fill="none" stroke="#d2d2d2" stroke-width="1" stroke-linejoin="round"><path d="M7 0.8L12.8 3.9V10.1L7 13.2L1.2 10.1V3.9Z"/><path d="M1.2 3.9L7 7L12.8 3.9M7 7V13.2"/></g></svg>
<div class="t " style="left:837px;top:165px;;letter-spacing:0.07px;">Sphere (2)</div>
<svg class="a" style="left:819.5px;top:181px" width="14" height="14" viewBox="0 0 14 14" ><g fill="none" stroke="#d2d2d2" stroke-width="1" stroke-linejoin="round"><path d="M7 0.8L12.8 3.9V10.1L7 13.2L1.2 10.1V3.9Z"/><path d="M1.2 3.9L7 7L12.8 3.9M7 7V13.2"/></g></svg>
<div class="t " style="left:837px;top:181px;;letter-spacing:0.07px;">Sphere (3)</div>
<div class="a" style="left:731px;top:459px;width:423px;height:19px;background:#282828;border-radius:3px 3px 0 0"></div>
<div class="a" style="left:731px;top:459px;width:76px;height:19px;background:#3c3c3c;border-radius:3px 3px 0 0"></div>
<svg class="a" style="left:740px;top:463px" width="10" height="11" viewBox="0 0 10 11" ><rect x="0" y="0" width="10" height="11" rx="1.2" fill="#c8c8c8"/><path d="M1.8 2.8H8.2M1.8 5.4H8.2M1.8 8H6.4" stroke="#3c3c3c" stroke-width="1.2"/></svg>
<div class="t c" style="left:755.5px;top:462.5px;color:#c8c8c8;">控制台</div>
<svg class="a" style="left:1140px;top:463.5px" width="2" height="10" viewBox="0 0 2 10" ><rect x="0" y="0" width="2" height="2" fill="#c4c4c4"/><rect x="0" y="4" width="2" height="2" fill="#c4c4c4"/><rect x="0" y="8" width="2" height="2" fill="#c4c4c4"/></svg>
<div class="a" style="left:731px;top:478px;width:423px;height:20px;background:#3c3c3c"></div>
<div class="a" style="left:731px;top:498px;width:423px;height:1px;background:#2a2a2a"></div>
<div class="a" style="left:731px;top:499px;width:423px;height:150px;background:#383838"></div>
<div class="a" style="left:782px;top:478px;width:33px;height:20px;background:#505050"></div>
<div class="a" style="left:1055px;top:478px;width:32px;height:20px;background:#505050"></div>
<div class="a" style="left:1088px;top:478px;width:32px;height:20px;background:#505050"></div>
<div class="a" style="left:1121px;top:478px;width:33px;height:20px;background:#505050"></div>
<div class="a" style="left:781px;top:478px;width:1px;height:20px;background:#2a2a2a"></div>
<div class="a" style="left:815px;top:478px;width:1px;height:20px;background:#2a2a2a"></div>
<div class="a" style="left:873px;top:478px;width:1px;height:20px;background:#2a2a2a"></div>
<div class="a" style="left:927px;top:478px;width:1px;height:20px;background:#2a2a2a"></div>
<div class="a" style="left:1054px;top:478px;width:1px;height:20px;background:#2a2a2a"></div>
<div class="a" style="left:1087px;top:478px;width:1px;height:20px;background:#2a2a2a"></div>
<div class="a" style="left:1120px;top:478px;width:1px;height:20px;background:#2a2a2a"></div>
<div class="a" style="left:764px;top:482px;width:1px;height:12px;background:#2a2a2a"></div>
<div class="t c" style="left:735px;top:480.5px;;">清除</div>
<svg class="a" style="left:769px;top:486.0px" width="8" height="5" viewBox="0 0 8 5" ><path d="M0 0.5H8L4 4.5Z" fill="#c4c4c4"/></svg>
<div class="t c" style="left:786.5px;top:480.5px;;">折叠</div>
<div class="t c" style="left:820px;top:480.5px;;">错误暂停</div>
<div class="t " style="left:877px;top:479.5px;;letter-spacing:0.35px;">Editor</div>
<svg class="a" style="left:915.5px;top:486.0px" width="8" height="5" viewBox="0 0 8 5" ><path d="M0 0.5H8L4 4.5Z" fill="#c4c4c4"/></svg>
<div class="fld" style="left:929px;top:480px;width:123px;height:16px;border-radius:4px"></div>
<svg class="a" style="left:934px;top:484px" width="8" height="8" viewBox="0 0 8 8" ><circle cx="3" cy="3" r="2.2" fill="none" stroke="#bdbdbd" stroke-width="1.2"/><path d="M4.7 4.7L7.5 7.5" stroke="#bdbdbd" stroke-width="1.4"/></svg>
<svg class="a" style="left:1060px;top:482px" width="12" height="12" viewBox="0 0 12 12" ><path d="M6 0.5A5.5 5 0 1 1 3 9.7L1 11.5L1.8 8.2A5.5 5 0 0 1 6 0.5Z" fill="#8f8f8f"/><path d="M6 2.5V6.4" stroke="#505050" stroke-width="1.5"/><circle cx="6" cy="8.2" r="0.9" fill="#505050"/></svg>
<div class="t " style="left:1074.5px;top:479.5px;color:#bdbdbd;">0</div>
<svg class="a" style="left:1093px;top:482px" width="13" height="12" viewBox="0 0 13 12" ><path d="M6.5 0.6L12.6 11.4H0.4Z" fill="#7c7c7c"/><path d="M6.5 4V8" stroke="#505050" stroke-width="1.4"/><circle cx="6.5" cy="9.7" r="0.8" fill="#505050"/></svg>
<div class="t " style="left:1107.5px;top:479.5px;color:#bdbdbd;">0</div>
<svg class="a" style="left:1126px;top:482px" width="12" height="12" viewBox="0 0 12 12" ><circle cx="6" cy="6" r="5.6" fill="#d8d8d8"/><path d="M6 2.6V6.8" stroke="#505050" stroke-width="1.6"/><circle cx="6" cy="9" r="1" fill="#505050"/></svg>
<div class="t " style="left:1140.5px;top:479.5px;color:#d2d2d2;">0</div>
<div class="a" style="left:1156px;top:3px;width:312px;height:19px;background:#282828;border-radius:3px 3px 0 0"></div>
<div class="a" style="left:1156px;top:3px;width:65px;height:19px;background:#3c3c3c;border-radius:3px 3px 0 0"></div>
<svg class="a" style="left:1163.5px;top:8px" width="12.2" height="10" viewBox="0 0 12.2 10" ><path d="M0 1Q0 0 1 0H4.4Q5 0 5.4 0.6L6.2 1.7H11.2Q12.2 1.7 12.2 2.7V9Q12.2 10 11.2 10H1Q0 10 0 9Z" fill="#c4c4c4"/></svg>
<div class="t c" style="left:1181px;top:6.5px;color:#c8c8c8;">项目</div>
<svg class="a" style="left:1433.4px;top:6.4px" width="9.4" height="10.6" viewBox="0 0 9.4 10.6" ><path d="M2.2 5V3.2Q2.2 0.8 4.6 0.8Q7 0.8 7 3.2" fill="none" stroke="#c4c4c4" stroke-width="1.2"/><rect x="0.6" y="5.2" width="8" height="4.6" rx="0.8" fill="none" stroke="#c4c4c4" stroke-width="1.2"/></svg>
<svg class="a" style="left:1454px;top:6.5px" width="2" height="10" viewBox="0 0 2 10" ><rect x="0" y="0" width="2" height="2" fill="#c4c4c4"/><rect x="0" y="4" width="2" height="2" fill="#c4c4c4"/><rect x="0" y="8" width="2" height="2" fill="#c4c4c4"/></svg>
<div class="a" style="left:1156px;top:22px;width:312px;height:20px;background:#3c3c3c"></div>
<div class="a" style="left:1156px;top:42px;width:312px;height:1px;background:#232323"></div>
<svg class="a" style="left:1163px;top:26px" width="12" height="12" viewBox="0 0 12 12" ><path d="M6 0V12M0 6H12" stroke="#d6d6d6" stroke-width="1.6"/></svg>
<svg class="a" style="left:1179px;top:29.5px" width="8" height="5" viewBox="0 0 8 5" ><path d="M0 0.5H8L4 4.5Z" fill="#c4c4c4"/></svg>
<div class="fld" style="left:1201px;top:24px;width:173px;height:16px;border-radius:4px"></div>
<div class="a" style="left:1356px;top:25px;width:17px;height:14px;background:#353535;border-left:1px solid #242424;border-radius:0 3px 3px 0"></div>
<svg class="a" style="left:1206px;top:28px" width="8" height="8" viewBox="0 0 8 8" ><circle cx="3" cy="3" r="2.2" fill="none" stroke="#bdbdbd" stroke-width="1.2"/><path d="M4.7 4.7L7.5 7.5" stroke="#bdbdbd" stroke-width="1.4"/></svg>
<svg class="a" style="left:1358px;top:26px" width="12" height="12" viewBox="0 0 12 12" ><g fill="none" stroke="#c4c4c4" stroke-width="1.1"><path d="M3 4V0.6H11.4V9H8"/><rect x="0.6" y="7" width="4.4" height="4.4"/><path d="M5 7L9.4 2.6M6.4 2.6H9.4V5.6"/></g></svg>
<div class="a" style="left:1376px;top:22px;width:1px;height:20px;background:#2a2a2a"></div>
<div class="a" style="left:1402px;top:22px;width:1px;height:20px;background:#2a2a2a"></div>
<div class="a" style="left:1428px;top:22px;width:1px;height:20px;background:#2a2a2a"></div>
<svg class="a" style="left:1382px;top:26px" width="13" height="12" viewBox="0 0 13 12" ><circle cx="3.4" cy="8.4" r="3.2" fill="#c4c4c4"/><rect x="2" y="0.2" width="5" height="4.6" fill="#c4c4c4"/><path d="M9.2 2.6L12.6 9.6H5.8Z" fill="#c4c4c4"/></svg>
<svg class="a" style="left:1408px;top:27px" width="11" height="10" viewBox="0 0 11 10" ><path d="M5.4 0.4H10.6V5.6L5.4 10L0.6 5.2Z" fill="#c4c4c4"/><circle cx="8.2" cy="2.8" r="1" fill="#3c3c3c"/></svg>
<svg class="a" style="left:1433px;top:26px" width="14" height="12" viewBox="0 0 14 12" ><path d="M0.8 6Q7 0 13.2 6Q7 12 0.8 6Z" fill="none" stroke="#c4c4c4" stroke-width="1.2"/><circle cx="7" cy="6" r="1.9" fill="#c4c4c4"/><path d="M2.4 11.4L11.6 0.6" stroke="#c4c4c4" stroke-width="1.3"/></svg>
<div class="t " style="left:1449.5px;top:23.5px;color:#c4c4c4;">14</div>
<div class="a" style="left:1156px;top:43px;width:312px;height:606px;background:#383838"></div>
<svg class="a" style="left:1160.0px;top:52.0px" width="9" height="8" viewBox="0 0 9 8" ><path d="M0 0.3H9L4.5 7.8Z" fill="#727272"/></svg>
<svg class="a" style="left:1173.7px;top:50.2px" width="14" height="10" viewBox="0 0 14 10" ><path d="M0.6 9.6V1.4Q0.6 0.6 1.4 0.6H4.2L5.5 2.2H10.2Q11 2.2 11 3V4" fill="none" stroke="#c6c6c6" stroke-width="1.2"/><path d="M0.5 10L2.6 4.5Q2.8 3.9 3.5 3.9H13.2Q14 3.9 13.7 4.6L11.9 9.4Q11.7 10 11 10Z" fill="#c6c6c6"/></svg>
<div class="t b" style="left:1190.5px;top:48px;;letter-spacing:-0.42px;">Assets</div>
<svg class="a" style="left:1175.0px;top:67.0px" width="8" height="9" viewBox="0 0 8 9" ><path d="M0.3 0V9L7.8 4.5Z" fill="#727272"/></svg>
<svg class="a" style="left:1187.9px;top:66.1px" width="12.2" height="10" viewBox="0 0 12.2 10" ><path d="M0 1Q0 0 1 0H4.4Q5 0 5.4 0.6L6.2 1.7H11.2Q12.2 1.7 12.2 2.7V9Q12.2 10 11.2 10H1Q0 10 0 9Z" fill="#c2c2c2"/></svg>
<div class="t " style="left:1204.5px;top:64px;;"></div>
<svg class="a" style="left:1175.0px;top:83.0px" width="8" height="9" viewBox="0 0 8 9" ><path d="M0.3 0V9L7.8 4.5Z" fill="#727272"/></svg>
<svg class="a" style="left:1187.9px;top:82.1px" width="12.2" height="10" viewBox="0 0 12.2 10" ><path d="M0 1Q0 0 1 0H4.4Q5 0 5.4 0.6L6.2 1.7H11.2Q12.2 1.7 12.2 2.7V9Q12.2 10 11.2 10H1Q0 10 0 9Z" fill="#c2c2c2"/></svg>
<div class="t " style="left:1204.5px;top:80px;;letter-spacing:-0.22px;">Flare</div>
<svg class="a" style="left:1175.0px;top:99.0px" width="8" height="9" viewBox="0 0 8 9" ><path d="M0.3 0V9L7.8 4.5Z" fill="#727272"/></svg>
<svg class="a" style="left:1187.9px;top:98.1px" width="12.2" height="10" viewBox="0 0 12.2 10" ><path d="M0 1Q0 0 1 0H4.4Q5 0 5.4 0.6L6.2 1.7H11.2Q12.2 1.7 12.2 2.7V9Q12.2 10 11.2 10H1Q0 10 0 9Z" fill="#c2c2c2"/></svg>
<div class="t " style="left:1204.5px;top:96px;;letter-spacing:0.20px;">Free Island Collection</div>
<svg class="a" style="left:1174.0px;top:116.0px" width="9" height="8" viewBox="0 0 9 8" ><path d="M0 0.3H9L4.5 7.8Z" fill="#727272"/></svg>
<svg class="a" style="left:1187.7px;top:114.2px" width="14" height="10" viewBox="0 0 14 10" ><path d="M0.6 9.6V1.4Q0.6 0.6 1.4 0.6H4.2L5.5 2.2H10.2Q11 2.2 11 3V4" fill="none" stroke="#c6c6c6" stroke-width="1.2"/><path d="M0.5 10L2.6 4.5Q2.8 3.9 3.5 3.9H13.2Q14 3.9 13.7 4.6L11.9 9.4Q11.7 10 11 10Z" fill="#c6c6c6"/></svg>
<div class="t " style="left:1204.5px;top:112px;;letter-spacing:0.39px;">Material</div>
<svg class="a" style="left:1201px;top:128.5px" width="13" height="13" viewBox="0 0 13 13" ><circle cx="6.5" cy="6.5" r="5.9" fill="#2f3438" stroke="#7ad6fc" stroke-width="1.1"/><circle cx="5.4" cy="5.2" r="4.3" fill="#7ad6fc"/><path d="M9.2 7.2A4.3 4.3 0 0 1 3.4 9.0" fill="none" stroke="#e9f7ff" stroke-width="0.7"/></svg>
<div class="t c " style="left:1218.5px;top:128.5px;;">不可放置的材质</div>
<svg class="a" style="left:1201px;top:144.5px" width="13" height="13" viewBox="0 0 13 13" ><circle cx="6.5" cy="6.5" r="5.9" fill="#2f3438" stroke="#7ad6fc" stroke-width="1.1"/><circle cx="5.4" cy="5.2" r="4.3" fill="#7ad6fc"/><path d="M9.2 7.2A4.3 4.3 0 0 1 3.4 9.0" fill="none" stroke="#e9f7ff" stroke-width="0.7"/></svg>
<div class="t c " style="left:1218.5px;top:144.5px;;">可放置的材质</div>
<svg class="a" style="left:1175.0px;top:163.0px" width="8" height="9" viewBox="0 0 8 9" ><path d="M0.3 0V9L7.8 4.5Z" fill="#727272"/></svg>
<svg class="a" style="left:1187.9px;top:162.1px" width="12.2" height="10" viewBox="0 0 12.2 10" ><path d="M0 1Q0 0 1 0H4.4Q5 0 5.4 0.6L6.2 1.7H11.2Q12.2 1.7 12.2 2.7V9Q12.2 10 11.2 10H1Q0 10 0 9Z" fill="#c2c2c2"/></svg>
<div class="t " style="left:1204.5px;top:160px;;letter-spacing:0.56px;">Models</div>
<svg class="a" style="left:1174.0px;top:180.0px" width="9" height="8" viewBox="0 0 9 8" ><path d="M0 0.3H9L4.5 7.8Z" fill="#727272"/></svg>
<svg class="a" style="left:1187.7px;top:178.2px" width="14" height="10" viewBox="0 0 14 10" ><path d="M0.6 9.6V1.4Q0.6 0.6 1.4 0.6H4.2L5.5 2.2H10.2Q11 2.2 11 3V4" fill="none" stroke="#c6c6c6" stroke-width="1.2"/><path d="M0.5 10L2.6 4.5Q2.8 3.9 3.5 3.9H13.2Q14 3.9 13.7 4.6L11.9 9.4Q11.7 10 11 10Z" fill="#c6c6c6"/></svg>
<div class="t " style="left:1204.5px;top:176px;;letter-spacing:0.00px;">Prefabs</div>
<svg class="a" style="left:1188.0px;top:196.0px" width="9" height="8" viewBox="0 0 9 8" ><path d="M0 0.3H9L4.5 7.8Z" fill="#727272"/></svg>
<svg class="a" style="left:1201.7px;top:194.2px" width="14" height="10" viewBox="0 0 14 10" ><path d="M0.6 9.6V1.4Q0.6 0.6 1.4 0.6H4.2L5.5 2.2H10.2Q11 2.2 11 3V4" fill="none" stroke="#c6c6c6" stroke-width="1.2"/><path d="M0.5 10L2.6 4.5Q2.8 3.9 3.5 3.9H13.2Q14 3.9 13.7 4.6L11.9 9.4Q11.7 10 11 10Z" fill="#c6c6c6"/></svg>
<div class="t c " style="left:1218.5px;top:192.5px;;">建造</div>
<svg class="a" style="left:1215px;top:207.7px" width="13.0" height="14.5" viewBox="0 0 13 14.5" ><path d="M6.5 0.2L12.8 3.6V10.9L6.5 14.3L0.2 10.9V3.6Z" fill="#7ad4fb"/><path d="M6.5 0.2L12.8 3.6L6.5 7L0.2 3.6Z" fill="#86dbfd"/><path d="M0.2 3.6L6.5 7L12.8 3.6M6.5 7V14.3" stroke="#35454f" stroke-width="0.9" fill="none"/></svg>
<div class="t " style="left:1232.5px;top:208px;;letter-spacing:0.84px;">Door</div>
<svg class="a" style="left:1215px;top:223.7px" width="13.0" height="14.5" viewBox="0 0 13 14.5" ><path d="M6.5 0.2L12.8 3.6V10.9L6.5 14.3L0.2 10.9V3.6Z" fill="#7ad4fb"/><path d="M6.5 0.2L12.8 3.6L6.5 7L0.2 3.6Z" fill="#86dbfd"/><path d="M0.2 3.6L6.5 7L12.8 3.6M6.5 7V14.3" stroke="#35454f" stroke-width="0.9" fill="none"/></svg>
<div class="t " style="left:1232.5px;top:224px;;letter-spacing:0.46px;">Doorway</div>
<svg class="a" style="left:1215px;top:239.7px" width="13.0" height="14.5" viewBox="0 0 13 14.5" ><path d="M6.5 0.2L12.8 3.6V10.9L6.5 14.3L0.2 10.9V3.6Z" fill="#7ad4fb"/><path d="M6.5 0.2L12.8 3.6L6.5 7L0.2 3.6Z" fill="#86dbfd"/><path d="M0.2 3.6L6.5 7L12.8 3.6M6.5 7V14.3" stroke="#35454f" stroke-width="0.9" fill="none"/></svg>
<div class="t " style="left:1232.5px;top:240px;;letter-spacing:0.28px;">Floor</div>
<svg class="a" style="left:1215px;top:255.7px" width="13.0" height="14.5" viewBox="0 0 13 14.5" ><path d="M6.5 0.2L12.8 3.6V10.9L6.5 14.3L0.2 10.9V3.6Z" fill="#7ad4fb"/><path d="M6.5 0.2L12.8 3.6L6.5 7L0.2 3.6Z" fill="#86dbfd"/><path d="M0.2 3.6L6.5 7L12.8 3.6M6.5 7V14.3" stroke="#35454f" stroke-width="0.9" fill="none"/></svg>
<div class="t " style="left:1232.5px;top:256px;;letter-spacing:-0.06px;">LShapedStairs</div>
<svg class="a" style="left:1215px;top:271.7px" width="13.0" height="14.5" viewBox="0 0 13 14.5" ><path d="M6.5 0.2L12.8 3.6V10.9L6.5 14.3L0.2 10.9V3.6Z" fill="#7ad4fb"/><path d="M6.5 0.2L12.8 3.6L6.5 7L0.2 3.6Z" fill="#86dbfd"/><path d="M0.2 3.6L6.5 7L12.8 3.6M6.5 7V14.3" stroke="#35454f" stroke-width="0.9" fill="none"/></svg>
<div class="t " style="left:1232.5px;top:272px;;letter-spacing:-0.15px;">Stairs</div>
<svg class="a" style="left:1215px;top:287.7px" width="13.0" height="14.5" viewBox="0 0 13 14.5" ><path d="M6.5 0.2L12.8 3.6V10.9L6.5 14.3L0.2 10.9V3.6Z" fill="#7ad4fb"/><path d="M6.5 0.2L12.8 3.6L6.5 7L0.2 3.6Z" fill="#86dbfd"/><path d="M0.2 3.6L6.5 7L12.8 3.6M6.5 7V14.3" stroke="#35454f" stroke-width="0.9" fill="none"/></svg>
<div class="t " style="left:1232.5px;top:288px;;letter-spacing:0.29px;">Wall</div>
<svg class="a" style="left:1201px;top:303.7px" width="13.0" height="14.5" viewBox="0 0 13 14.5" ><path d="M6.5 0.2L12.8 3.6V10.9L6.5 14.3L0.2 10.9V3.6Z" fill="#7ad4fb"/><path d="M6.5 0.2L12.8 3.6L6.5 7L0.2 3.6Z" fill="#86dbfd"/><path d="M0.2 3.6L6.5 7L12.8 3.6M6.5 7V14.3" stroke="#35454f" stroke-width="0.9" fill="none"/></svg>
<div class="t " style="left:1218.5px;top:304px;;letter-spacing:0.15px;">FlatRoof</div>
<svg class="a" style="left:1201px;top:319.7px" width="13.0" height="14.5" viewBox="0 0 13 14.5" ><path d="M6.5 0.2L12.8 3.6V10.9L6.5 14.3L0.2 10.9V3.6Z" fill="#7ad4fb"/><path d="M6.5 0.2L12.8 3.6L6.5 7L0.2 3.6Z" fill="#86dbfd"/><path d="M0.2 3.6L6.5 7L12.8 3.6M6.5 7V14.3" stroke="#35454f" stroke-width="0.9" fill="none"/></svg>
<div class="t " style="left:1218.5px;top:320px;;letter-spacing:0.02px;">Pillar</div>
<svg class="a" style="left:1201px;top:335.7px" width="13.0" height="14.5" viewBox="0 0 13 14.5" ><path d="M6.5 0.2L12.8 3.6V10.9L6.5 14.3L0.2 10.9V3.6Z" fill="#7ad4fb"/><path d="M6.5 0.2L12.8 3.6L6.5 7L0.2 3.6Z" fill="#86dbfd"/><path d="M0.2 3.6L6.5 7L12.8 3.6M6.5 7V14.3" stroke="#35454f" stroke-width="0.9" fill="none"/></svg>
<div class="t " style="left:1218.5px;top:336px;;letter-spacing:0.34px;">Platform</div>
<svg class="a" style="left:1201px;top:351.7px" width="13.0" height="14.5" viewBox="0 0 13 14.5" ><path d="M6.5 0.2L12.8 3.6V10.9L6.5 14.3L0.2 10.9V3.6Z" fill="#7ad4fb"/><path d="M6.5 0.2L12.8 3.6L6.5 7L0.2 3.6Z" fill="#86dbfd"/><path d="M0.2 3.6L6.5 7L12.8 3.6M6.5 7V14.3" stroke="#35454f" stroke-width="0.9" fill="none"/></svg>
<div class="t " style="left:1218.5px;top:352px;;letter-spacing:0.39px;">WallWithWindow</div>
<svg class="a" style="left:1175.0px;top:371.0px" width="8" height="9" viewBox="0 0 8 9" ><path d="M0.3 0V9L7.8 4.5Z" fill="#727272"/></svg>
<svg class="a" style="left:1187.9px;top:370.1px" width="12.2" height="10" viewBox="0 0 12.2 10" ><path d="M0 1Q0 0 1 0H4.4Q5 0 5.4 0.6L6.2 1.7H11.2Q12.2 1.7 12.2 2.7V9Q12.2 10 11.2 10H1Q0 10 0 9Z" fill="#c2c2c2"/></svg>
<div class="t " style="left:1204.5px;top:368px;;letter-spacing:-0.52px;">Scenes</div>
<svg class="a" style="left:1174.0px;top:388.0px" width="9" height="8" viewBox="0 0 9 8" ><path d="M0 0.3H9L4.5 7.8Z" fill="#727272"/></svg>
<svg class="a" style="left:1187.7px;top:386.2px" width="14" height="10" viewBox="0 0 14 10" ><path d="M0.6 9.6V1.4Q0.6 0.6 1.4 0.6H4.2L5.5 2.2H10.2Q11 2.2 11 3V4" fill="none" stroke="#c6c6c6" stroke-width="1.2"/><path d="M0.5 10L2.6 4.5Q2.8 3.9 3.5 3.9H13.2Q14 3.9 13.7 4.6L11.9 9.4Q11.7 10 11 10Z" fill="#c6c6c6"/></svg>
<div class="t " style="left:1204.5px;top:384px;;letter-spacing:-0.00px;">Scripts</div>
<svg class="a" style="left:1188.0px;top:404.0px" width="9" height="8" viewBox="0 0 9 8" ><path d="M0 0.3H9L4.5 7.8Z" fill="#727272"/></svg>
<svg class="a" style="left:1201.7px;top:402.2px" width="14" height="10" viewBox="0 0 14 10" ><path d="M0.6 9.6V1.4Q0.6 0.6 1.4 0.6H4.2L5.5 2.2H10.2Q11 2.2 11 3V4" fill="none" stroke="#c6c6c6" stroke-width="1.2"/><path d="M0.5 10L2.6 4.5Q2.8 3.9 3.5 3.9H13.2Q14 3.9 13.7 4.6L11.9 9.4Q11.7 10 11 10Z" fill="#c6c6c6"/></svg>
<div class="t " style="left:1218.5px;top:400px;;letter-spacing:0.27px;">Building</div>
<svg class="a" style="left:1216px;top:416px" width="12" height="14" viewBox="0 0 12 14" ><path d="M0.8 0H8.4L12 3.6V13.2Q12 14 11.2 14H0.8Q0 14 0 13.2V0.8Q0 0 0.8 0Z" fill="#ececec"/><path d="M8.4 0V3.6H12Z" fill="#bcbcbc"/><g stroke="#1f7a2c" stroke-width="1.5" fill="none"><path d="M4.9 3.6L4.1 11.4M8 3.6L7.2 11.4M2.4 6.1H9.8M2 9H9.4"/></g></svg>
<div class="t " style="left:1232.5px;top:416px;;letter-spacing:0.43px;">BuildingManager</div>
<svg class="a" style="left:1216px;top:432px" width="12" height="14" viewBox="0 0 12 14" ><path d="M0.8 0H8.4L12 3.6V13.2Q12 14 11.2 14H0.8Q0 14 0 13.2V0.8Q0 0 0.8 0Z" fill="#ececec"/><path d="M8.4 0V3.6H12Z" fill="#bcbcbc"/><g stroke="#1f7a2c" stroke-width="1.5" fill="none"><path d="M4.9 3.6L4.1 11.4M8 3.6L7.2 11.4M2.4 6.1H9.8M2 9H9.4"/></g></svg>
<div class="t " style="left:1232.5px;top:432px;;letter-spacing:0.21px;">Connector</div>
<svg class="a" style="left:1188.0px;top:452.0px" width="9" height="8" viewBox="0 0 9 8" ><path d="M0 0.3H9L4.5 7.8Z" fill="#727272"/></svg>
<svg class="a" style="left:1201.7px;top:450.2px" width="14" height="10" viewBox="0 0 14 10" ><path d="M0.6 9.6V1.4Q0.6 0.6 1.4 0.6H4.2L5.5 2.2H10.2Q11 2.2 11 3V4" fill="none" stroke="#c6c6c6" stroke-width="1.2"/><path d="M0.5 10L2.6 4.5Q2.8 3.9 3.5 3.9H13.2Q14 3.9 13.7 4.6L11.9 9.4Q11.7 10 11 10Z" fill="#c6c6c6"/></svg>
<div class="t " style="left:1218.5px;top:448px;;letter-spacing:0.37px;">DayAndNight</div>
<svg class="a" style="left:1216px;top:464px" width="12" height="14" viewBox="0 0 12 14" ><path d="M0.8 0H8.4L12 3.6V13.2Q12 14 11.2 14H0.8Q0 14 0 13.2V0.8Q0 0 0.8 0Z" fill="#ececec"/><path d="M8.4 0V3.6H12Z" fill="#bcbcbc"/><g stroke="#1f7a2c" stroke-width="1.5" fill="none"><path d="M4.9 3.6L4.1 11.4M8 3.6L7.2 11.4M2.4 6.1H9.8M2 9H9.4"/></g></svg>
<div class="t " style="left:1232.5px;top:464px;;letter-spacing:0.37px;">DayAndNight</div>
<svg class="a" style="left:1188.0px;top:484.0px" width="9" height="8" viewBox="0 0 9 8" ><path d="M0 0.3H9L4.5 7.8Z" fill="#727272"/></svg>
<svg class="a" style="left:1201.7px;top:482.2px" width="14" height="10" viewBox="0 0 14 10" ><path d="M0.6 9.6V1.4Q0.6 0.6 1.4 0.6H4.2L5.5 2.2H10.2Q11 2.2 11 3V4" fill="none" stroke="#c6c6c6" stroke-width="1.2"/><path d="M0.5 10L2.6 4.5Q2.8 3.9 3.5 3.9H13.2Q14 3.9 13.7 4.6L11.9 9.4Q11.7 10 11 10Z" fill="#c6c6c6"/></svg>
<div class="t " style="left:1218.5px;top:480px;;letter-spacing:-0.17px;">Player</div>
<svg class="a" style="left:1216px;top:496px" width="12" height="14" viewBox="0 0 12 14" ><path d="M0.8 0H8.4L12 3.6V13.2Q12 14 11.2 14H0.8Q0 14 0 13.2V0.8Q0 0 0.8 0Z" fill="#ececec"/><path d="M8.4 0V3.6H12Z" fill="#bcbcbc"/><g stroke="#1f7a2c" stroke-width="1.5" fill="none"><path d="M4.9 3.6L4.1 11.4M8 3.6L7.2 11.4M2.4 6.1H9.8M2 9H9.4"/></g></svg>
<div class="t " style="left:1232.5px;top:496px;;letter-spacing:0.52px;">MouseLook</div>
<svg class="a" style="left:1216px;top:512px" width="12" height="14" viewBox="0 0 12 14" ><path d="M0.8 0H8.4L12 3.6V13.2Q12 14 11.2 14H0.8Q0 14 0 13.2V0.8Q0 0 0.8 0Z" fill="#ececec"/><path d="M8.4 0V3.6H12Z" fill="#bcbcbc"/><g stroke="#1f7a2c" stroke-width="1.5" fill="none"><path d="M4.9 3.6L4.1 11.4M8 3.6L7.2 11.4M2.4 6.1H9.8M2 9H9.4"/></g></svg>
<div class="t " style="left:1232.5px;top:512px;;letter-spacing:0.41px;">MovementScript</div>
<svg class="a" style="left:1202px;top:528px" width="12" height="14" viewBox="0 0 12 14" ><path d="M0.8 0H8.4L12 3.6V13.2Q12 14 11.2 14H0.8Q0 14 0 13.2V0.8Q0 0 0.8 0Z" fill="#ececec"/><path d="M8.4 0V3.6H12Z" fill="#bcbcbc"/><g stroke="#1f7a2c" stroke-width="1.5" fill="none"><path d="M4.9 3.6L4.1 11.4M8 3.6L7.2 11.4M2.4 6.1H9.8M2 9H9.4"/></g></svg>
<div class="t " style="left:1218.5px;top:528px;;letter-spacing:0.31px;">TreeInteraction</div>
<svg class="a" style="left:1175.0px;top:547.0px" width="8" height="9" viewBox="0 0 8 9" ><path d="M0.3 0V9L7.8 4.5Z" fill="#727272"/></svg>
<svg class="a" style="left:1187.9px;top:546.1px" width="12.2" height="10" viewBox="0 0 12.2 10" ><path d="M0 1Q0 0 1 0H4.4Q5 0 5.4 0.6L6.2 1.7H11.2Q12.2 1.7 12.2 2.7V9Q12.2 10 11.2 10H1Q0 10 0 9Z" fill="#c2c2c2"/></svg>
<div class="t " style="left:1204.5px;top:544px;;letter-spacing:0.18px;">Skybox</div>
<svg class="a" style="left:1175.0px;top:563.0px" width="8" height="9" viewBox="0 0 8 9" ><path d="M0.3 0V9L7.8 4.5Z" fill="#727272"/></svg>
<svg class="a" style="left:1188px;top:560px" width="11" height="14" viewBox="0 0 11 14" ><path d="M0.8 0H7.4L11 3.6V13.2Q11 14 10.2 14H0.8Q0 14 0 13.2V0.8Q0 0 0.8 0Z" fill="#ececec"/><path d="M7.4 0V3.6H11Z" fill="#bcbcbc"/><path d="M1.2 12.8V8.6L5 6.4L9.8 5.8V12.8Z" fill="#4f9a2a"/><path d="M1.2 11.2L9.8 7.6M3.6 12.8L9.8 10" stroke="#d6eeb0" stroke-width="0.9"/></svg>
<div class="t " style="left:1204.5px;top:560px;;letter-spacing:0.41px;">New Terrain</div>
<svg class="a" style="left:1188px;top:576px" width="11" height="14" viewBox="0 0 11 14" ><path d="M0.8 0H7.4L11 3.6V13.2Q11 14 10.2 14H0.8Q0 14 0 13.2V0.8Q0 0 0.8 0Z" fill="#ececec"/><path d="M7.4 0V3.6H11Z" fill="#bcbcbc"/></svg>
<div class="t " style="left:1204.5px;top:576px;;letter-spacing:0.02px;">NewLayer</div>
<svg class="a" style="left:1161.0px;top:595.0px" width="8" height="9" viewBox="0 0 8 9" ><path d="M0.3 0V9L7.8 4.5Z" fill="#727272"/></svg>
<svg class="a" style="left:1173.9px;top:594.1px" width="12.2" height="10" viewBox="0 0 12.2 10" ><path d="M0 1Q0 0 1 0H4.4Q5 0 5.4 0.6L6.2 1.7H11.2Q12.2 1.7 12.2 2.7V9Q12.2 10 11.2 10H1Q0 10 0 9Z" fill="#c2c2c2"/></svg>
<div class="t b" style="left:1190.5px;top:592px;;letter-spacing:-0.28px;">Packages</div>
<div class="a" style="left:1470px;top:3px;width:450px;height:19px;background:#282828;border-radius:3px 3px 0 0"></div>
<div class="a" style="left:1470px;top:3px;width:76px;height:19px;background:#3c3c3c;border-radius:3px 3px 0 0"></div>
<svg class="a" style="left:1478.5px;top:7.5px" width="10" height="10" viewBox="0 0 10 10" ><circle cx="5" cy="5" r="5" fill="#c8c8c8"/><rect x="4.2" y="4.2" width="1.7" height="3.8" fill="#3c3c3c"/><rect x="4.2" y="1.9" width="1.7" height="1.6" fill="#3c3c3c"/></svg>
<div class="t c" style="left:1494px;top:6.5px;color:#c8c8c8;">检查器</div>
<svg class="a" style="left:1557px;top:7px" width="9" height="12" viewBox="0 0 9 12" ><path d="M4.5 0.5A3.9 3.9 0 0 0 2.4 7.6V8.6H6.6V7.6A3.9 3.9 0 0 0 4.5 0.5Z" fill="#c8c8c8"/><rect x="2.8" y="9.4" width="3.4" height="1.8" rx="0.6" fill="#c8c8c8"/></svg>
<div class="t c" style="left:1572px;top:6.5px;color:#c8c8c8;">光照</div>
<svg class="a" style="left:1883.9px;top:6.4px" width="9.4" height="10.6" viewBox="0 0 9.4 10.6" ><path d="M2.2 5V3.2Q2.2 0.8 4.6 0.8Q7 0.8 7 3.2" fill="none" stroke="#c4c4c4" stroke-width="1.2"/><rect x="0.6" y="5.2" width="8" height="4.6" rx="0.8" fill="none" stroke="#c4c4c4" stroke-width="1.2"/></svg>
<svg class="a" style="left:1905px;top:6.5px" width="2" height="10" viewBox="0 0 2 10" ><rect x="0" y="0" width="2" height="2" fill="#c4c4c4"/><rect x="0" y="4" width="2" height="2" fill="#c4c4c4"/><rect x="0" y="8" width="2" height="2" fill="#c4c4c4"/></svg>
<div class="a" style="left:1470px;top:22px;width:450px;height:627px;background:#383838"></div>
<div class="a" style="left:1470px;top:22px;width:450px;height:59px;background:#3c3c3c"></div>
<svg class="a" style="left:1477px;top:32px" width="21" height="22" viewBox="0 0 21 22" ><g fill="none" stroke="#d0d0d0" stroke-width="1.5" stroke-linejoin="round"><path d="M10.5 1L19.8 5.8V16.2L10.5 21L1.2 16.2V5.8Z"/><path d="M1.2 5.8L10.5 10.8L19.8 5.8M10.5 10.8V21"/></g></svg>
<svg class="a" style="left:1497px;top:53.5px" width="6" height="4" viewBox="0 0 6 4" ><path d="M0 0.5H6L3 3.5Z" fill="#c4c4c4"/></svg>
<svg class="a" style="left:1517px;top:33px" width="14" height="14" viewBox="0 0 14 14" ><rect x="0.5" y="0.5" width="13" height="13" rx="2" fill="#2a2a2a" stroke="#1b1b1b"/><path d="M3.3 7.2L5.9 9.8L10.8 4.2" fill="none" stroke="#e6e6e6" stroke-width="1.6"/></svg>
<div class="fld" style="left:1537px;top:31px;width:300px;height:18px"></div>
<div class="t b" style="left:1540px;top:32px;color:#e4e4e4;letter-spacing:-0.04px;">Sphere</div>
<svg class="a" style="left:1840px;top:33px" width="14" height="14" viewBox="0 0 14 14" ><rect x="0.5" y="0.5" width="13" height="13" rx="2" fill="#2a2a2a" stroke="#1b1b1b"/></svg>
<div class="t c" style="left:1858px;top:32.5px;;">静态的</div>
<svg class="a" style="left:1906px;top:38.0px" width="8" height="5" viewBox="0 0 8 5" ><path d="M0 0.5H8L4 4.5Z" fill="#c4c4c4"/></svg>
<div class="t c" style="left:1512px;top:56.5px;;">标签</div>
<div class="dd" style="left:1540px;top:56px;width:166px;height:16px"></div>
<div class="t " style="left:1543px;top:56px;;letter-spacing:0.40px;">Untagged</div>
<svg class="a" style="left:1693px;top:62.0px" width="8" height="5" viewBox="0 0 8 5" ><path d="M0 0.5H8L4 4.5Z" fill="#c4c4c4"/></svg>
<div class="t c" style="left:1721px;top:56.5px;;">图层</div>
<div class="dd" style="left:1749px;top:56px;width:166px;height:16px"></div>
<div class="t " style="left:1752px;top:56px;;letter-spacing:0.21px;">BuildingSphere</div>
<svg class="a" style="left:1902px;top:62.0px" width="8" height="5" viewBox="0 0 8 5" ><path d="M0 0.5H8L4 4.5Z" fill="#c4c4c4"/></svg>
<div class="a" style="left:1470px;top:81px;width:450px;height:1px;background:#1a1a1a"></div>
<div class="a" style="left:1470px;top:82px;width:450px;height:20px;background:#3e3e3e"></div>
<svg class="a" style="left:1475.5px;top:88.5px" width="9" height="8" viewBox="0 0 9 8" ><path d="M0 0.3H9L4.5 7.8Z" fill="#6e6e6e"/></svg>
<svg class="a" style="left:1490px;top:85px" width="16" height="14" viewBox="0 0 16 14" ><path d="M8 8V1" stroke="#8fe04a" stroke-width="2"/><path d="M8 8L1.5 12" stroke="#5ab4f0" stroke-width="2"/><path d="M8 8L14.5 12" stroke="#f0633a" stroke-width="2"/></svg>
<div class="t b" style="left:1530px;top:84.5px;color:#e0e0e0;letter-spacing:0.27px;">Transform</div>
<svg class="a" style="left:1861.5px;top:86.5px" width="11" height="11" viewBox="0 0 11 11" ><circle cx="5.5" cy="5.5" r="5.3" fill="#c4c4c4"/><text x="5.5" y="9" font-size="9" font-weight="bold" text-anchor="middle" fill="#3c3c3c" font-family="Liberation Sans,sans-serif" letter-spacing="0">?</text></svg>
<svg class="a" style="left:1881.5px;top:86.5px" width="11" height="11" viewBox="0 0 11 11" ><g stroke="#c4c4c4" stroke-width="1.3" fill="none"><path d="M0 3H6M9 3H11M0 8H2M5 8H11M7.5 0.5V5.5M3.5 5.5V10.5"/></g></svg>
<svg class="a" style="left:1905.5px;top:87px" width="2" height="10" viewBox="0 0 2 10" ><rect x="0" y="0" width="2" height="2" fill="#c4c4c4"/><rect x="0" y="4" width="2" height="2" fill="#c4c4c4"/><rect x="0" y="8" width="2" height="2" fill="#c4c4c4"/></svg>
<div class="t c" style="left:1489px;top:108.5px;;">位置</div>
<div class="t " style="left:1654px;top:108.5px;;">X</div>
<div class="fld" style="left:1669px;top:107px;width:68px;height:18px"></div>
<div class="t " style="left:1672px;top:109px;;">0</div>
<div class="t " style="left:1743px;top:108.5px;;">Y</div>
<div class="fld" style="left:1758px;top:107px;width:68px;height:18px"></div>
<div class="t " style="left:1761px;top:109px;;">4</div>
<div class="t " style="left:1832px;top:108.5px;;">Z</div>
<div class="fld" style="left:1847px;top:107px;width:68px;height:18px"></div>
<div class="t " style="left:1850px;top:109px;;">0</div>
<div class="t c" style="left:1489px;top:128.5px;;">旋转</div>
<div class="t " style="left:1654px;top:128.5px;;">X</div>
<div class="fld" style="left:1669px;top:127px;width:68px;height:18px"></div>
<div class="t " style="left:1672px;top:129px;;">0</div>
<div class="t " style="left:1743px;top:128.5px;;">Y</div>
<div class="fld" style="left:1758px;top:127px;width:68px;height:18px"></div>
<div class="t " style="left:1761px;top:129px;;">0</div>
<div class="t " style="left:1832px;top:128.5px;;">Z</div>
<div class="fld" style="left:1847px;top:127px;width:68px;height:18px"></div>
<div class="t " style="left:1850px;top:129px;;">0</div>
<div class="t c" style="left:1489px;top:148.5px;;">缩放</div>
<div class="t " style="left:1654px;top:148.5px;;">X</div>
<div class="fld" style="left:1669px;top:147px;width:68px;height:18px"></div>
<div class="t " style="left:1672px;top:149px;;">1</div>
<div class="t " style="left:1743px;top:148.5px;;">Y</div>
<div class="fld" style="left:1758px;top:147px;width:68px;height:18px"></div>
<div class="t " style="left:1761px;top:149px;;">1</div>
<div class="t " style="left:1832px;top:148.5px;;">Z</div>
<div class="fld" style="left:1847px;top:147px;width:68px;height:18px"></div>
<div class="t " style="left:1850px;top:149px;;">1</div>
<svg class="a" style="left:1631px;top:151px" width="14" height="10" viewBox="0 0 14 10" ><g fill="none" stroke="#c4c4c4" stroke-width="1.2"><path d="M5.6 2H3.6A3 3 0 0 0 3.6 8H5.6M8.4 2H10.4A3 3 0 0 1 10.4 8H8.4"/><path d="M2 0L12 10"/></g></svg>
<div class="a" style="left:1470px;top:174px;width:450px;height:1px;background:#1a1a1a"></div>
<div class="a" style="left:1470px;top:175px;width:450px;height:21px;background:#3e3e3e"></div>
<svg class="a" style="left:1476.5px;top:180.5px" width="8" height="9" viewBox="0 0 8 9" ><path d="M0.3 0V9L7.8 4.5Z" fill="#6e6e6e"/></svg>
<svg class="a" style="left:1491px;top:178.5px" width="13" height="13" viewBox="0 0 13 13" ><g fill="none" stroke="#7fd1f7" stroke-width="1.1"><rect x="0.6" y="0.6" width="11.8" height="11.8"/><path d="M4.5 0.6V12.4M8.5 0.6V12.4M0.6 4.5H12.4M0.6 8.5H12.4"/></g></svg>
<div class="t b" style="left:1530px;top:177.5px;color:#e0e0e0;letter-spacing:0.22px;">Sphere (Mesh Filter)</div>
<svg class="a" style="left:1861.5px;top:179.5px" width="11" height="11" viewBox="0 0 11 11" ><circle cx="5.5" cy="5.5" r="5.3" fill="#c4c4c4"/><text x="5.5" y="9" font-size="9" font-weight="bold" text-anchor="middle" fill="#3c3c3c" font-family="Liberation Sans,sans-serif" letter-spacing="0">?</text></svg>
<svg class="a" style="left:1881.5px;top:179.5px" width="11" height="11" viewBox="0 0 11 11" ><g stroke="#c4c4c4" stroke-width="1.3" fill="none"><path d="M0 3H6M9 3H11M0 8H2M5 8H11M7.5 0.5V5.5M3.5 5.5V10.5"/></g></svg>
<svg class="a" style="left:1905.5px;top:180px" width="2" height="10" viewBox="0 0 2 10" ><rect x="0" y="0" width="2" height="2" fill="#c4c4c4"/><rect x="0" y="4" width="2" height="2" fill="#c4c4c4"/><rect x="0" y="8" width="2" height="2" fill="#c4c4c4"/></svg>
<div class="a" style="left:1470px;top:196px;width:450px;height:1px;background:#1a1a1a"></div>
<div class="a" style="left:1470px;top:197px;width:450px;height:21px;background:#3e3e3e"></div>
<svg class="a" style="left:1476.5px;top:202.5px" width="8" height="9" viewBox="0 0 8 9" ><path d="M0.3 0V9L7.8 4.5Z" fill="#6e6e6e"/></svg>
<svg class="a" style="left:1491px;top:200.5px" width="14" height="13" viewBox="0 0 14 13" ><g fill="none" stroke="#7fd1f7" stroke-width="1.1"><path d="M0.6 12V0.6H12.4V6"/><path d="M4.5 0.6V11M8.5 0.6V6M0.6 4.5H12.4M0.6 8.5H5"/></g><path d="M5 10Q9 6 13.6 10Q9 14 5 10Z" fill="#3e3e3e" stroke="#d8d8d8" stroke-width="1"/><circle cx="9.3" cy="10" r="1.4" fill="#d8d8d8"/></svg>
<svg class="a" style="left:1510px;top:200px" width="14" height="14" viewBox="0 0 14 14" ><rect x="0.5" y="0.5" width="13" height="13" rx="2" fill="#2a2a2a" stroke="#1b1b1b"/></svg>
<div class="t b" style="left:1530px;top:199.5px;color:#e0e0e0;letter-spacing:0.15px;">Mesh Renderer</div>
<svg class="a" style="left:1861.5px;top:201.5px" width="11" height="11" viewBox="0 0 11 11" ><circle cx="5.5" cy="5.5" r="5.3" fill="#c4c4c4"/><text x="5.5" y="9" font-size="9" font-weight="bold" text-anchor="middle" fill="#3c3c3c" font-family="Liberation Sans,sans-serif" letter-spacing="0">?</text></svg>
<svg class="a" style="left:1881.5px;top:201.5px" width="11" height="11" viewBox="0 0 11 11" ><g stroke="#c4c4c4" stroke-width="1.3" fill="none"><path d="M0 3H6M9 3H11M0 8H2M5 8H11M7.5 0.5V5.5M3.5 5.5V10.5"/></g></svg>
<svg class="a" style="left:1905.5px;top:202px" width="2" height="10" viewBox="0 0 2 10" ><rect x="0" y="0" width="2" height="2" fill="#c4c4c4"/><rect x="0" y="4" width="2" height="2" fill="#c4c4c4"/><rect x="0" y="8" width="2" height="2" fill="#c4c4c4"/></svg>
<div class="a" style="left:1470px;top:218px;width:450px;height:1px;background:#1a1a1a"></div>
<div class="a" style="left:1470px;top:219px;width:450px;height:21px;background:#3e3e3e"></div>
<svg class="a" style="left:1475.5px;top:225.5px" width="9" height="8" viewBox="0 0 9 8" ><path d="M0 0.3H9L4.5 7.8Z" fill="#6e6e6e"/></svg>
<svg class="a" style="left:1491.5px;top:223px" width="12" height="12" viewBox="0 0 12 12" ><circle cx="6" cy="6" r="6" fill="#a6e34b"/><path d="M0.3 5.4Q6 8.6 11.7 5.4" fill="none" stroke="#4a7a1e" stroke-width="1.4"/></svg>
<svg class="a" style="left:1510px;top:222px" width="14" height="14" viewBox="0 0 14 14" ><rect x="0.5" y="0.5" width="13" height="13" rx="2" fill="#2a2a2a" stroke="#1b1b1b"/><path d="M3.3 7.2L5.9 9.8L10.8 4.2" fill="none" stroke="#e6e6e6" stroke-width="1.6"/></svg>
<div class="t b" style="left:1530px;top:221.5px;color:#e0e0e0;letter-spacing:0.14px;">Sphere Collider</div>
<svg class="a" style="left:1861.5px;top:223.5px" width="11" height="11" viewBox="0 0 11 11" ><circle cx="5.5" cy="5.5" r="5.3" fill="#c4c4c4"/><text x="5.5" y="9" font-size="9" font-weight="bold" text-anchor="middle" fill="#3c3c3c" font-family="Liberation Sans,sans-serif" letter-spacing="0">?</text></svg>
<svg class="a" style="left:1881.5px;top:223.5px" width="11" height="11" viewBox="0 0 11 11" ><g stroke="#c4c4c4" stroke-width="1.3" fill="none"><path d="M0 3H6M9 3H11M0 8H2M5 8H11M7.5 0.5V5.5M3.5 5.5V10.5"/></g></svg>
<svg class="a" style="left:1905.5px;top:224px" width="2" height="10" viewBox="0 0 2 10" ><rect x="0" y="0" width="2" height="2" fill="#c4c4c4"/><rect x="0" y="4" width="2" height="2" fill="#c4c4c4"/><rect x="0" y="8" width="2" height="2" fill="#c4c4c4"/></svg>
<div class="t c" style="left:1489px;top:246px;;">编辑碰撞器</div>
<div class="a" style="left:1652px;top:247px;width:32px;height:20px;background:#3a3a3a;border:1px solid #1f1f1f;border-radius:3px"></div>
<svg class="a" style="left:1662px;top:251px" width="13" height="12" viewBox="0 0 13 12" ><g fill="none" stroke="#c4c4c4" stroke-width="1"><path d="M2 9L5.6 2.4M7.4 2.4L11 7.6"/><rect x="5" y="0.5" width="3" height="3"/><rect x="0.5" y="8.5" width="3" height="3"/><rect x="9.5" y="7" width="3" height="3"/></g></svg>
<div class="t c" style="left:1489px;top:274.5px;;">是触发器</div>
<svg class="a" style="left:1653px;top:275px" width="14" height="14" viewBox="0 0 14 14" ><rect x="0.5" y="0.5" width="13" height="13" rx="2" fill="#2a2a2a" stroke="#1b1b1b"/><path d="M3.3 7.2L5.9 9.8L10.8 4.2" fill="none" stroke="#e6e6e6" stroke-width="1.6"/></svg>
<div class="t c" style="left:1489px;top:295px;;">材质</div>
<div class="fld" style="left:1653px;top:293px;width:263px;height:18px"></div>
<div class="a" style="left:1897px;top:294px;width:18px;height:16px;background:#353535;border-radius:0 2px 2px 0"></div>
<svg class="a" style="left:1900.5px;top:296.5px" width="11" height="11" viewBox="0 0 11 11" ><circle cx="5.5" cy="5.5" r="4.6" fill="none" stroke="#c4c4c4" stroke-width="1.1"/><circle cx="5.5" cy="5.5" r="1.7" fill="#c4c4c4"/></svg>
<div class="t c" style="left:1656px;top:295.5px;;">无 (物理材质)</div>
<div class="t c" style="left:1489px;top:315px;;">中心</div>
<div class="t " style="left:1654px;top:314.5px;;">X</div>
<div class="fld" style="left:1669px;top:313px;width:68px;height:18px"></div>
<div class="t " style="left:1672px;top:315px;;">0</div>
<div class="t " style="left:1743px;top:314.5px;;">Y</div>
<div class="fld" style="left:1758px;top:313px;width:68px;height:18px"></div>
<div class="t " style="left:1761px;top:315px;;">0</div>
<div class="t " style="left:1832px;top:314.5px;;">Z</div>
<div class="fld" style="left:1847px;top:313px;width:68px;height:18px"></div>
<div class="t " style="left:1850px;top:315px;;">0</div>
<div class="t c" style="left:1489px;top:335px;;">半径</div>
<div class="fld" style="left:1653px;top:333px;width:263px;height:18px"></div>
<div class="t " style="left:1656px;top:335px;;">0.5</div>
<div class="a" style="left:1470px;top:360px;width:450px;height:1px;background:#1a1a1a"></div>
<div class="a" style="left:1470px;top:361px;width:450px;height:22px;background:#3e3e3e"></div>
<svg class="a" style="left:1475.5px;top:368.5px" width="9" height="8" viewBox="0 0 9 8" ><path d="M0 0.3H9L4.5 7.8Z" fill="#6e6e6e"/></svg>
<svg class="a" style="left:1492px;top:365px" width="12" height="14" viewBox="0 0 12 14" ><path d="M0.8 0H8.4L12 3.6V13.2Q12 14 11.2 14H0.8Q0 14 0 13.2V0.8Q0 0 0.8 0Z" fill="#ececec"/><path d="M8.4 0V3.6H12Z" fill="#bcbcbc"/><g stroke="#1f7a2c" stroke-width="1.5" fill="none"><path d="M4.9 3.6L4.1 11.4M8 3.6L7.2 11.4M2.4 6.1H9.8M2 9H9.4"/></g></svg>
<div class="t b" style="left:1530px;top:365px;color:#e0e0e0;">Connector （脚本）</div>
<svg class="a" style="left:1861.5px;top:366.5px" width="11" height="11" viewBox="0 0 11 11" ><circle cx="5.5" cy="5.5" r="5.3" fill="#c4c4c4"/><text x="5.5" y="9" font-size="9" font-weight="bold" text-anchor="middle" fill="#3c3c3c" font-family="Liberation Sans,sans-serif" letter-spacing="0">?</text></svg>
<svg class="a" style="left:1881.5px;top:366.5px" width="11" height="11" viewBox="0 0 11 11" ><g stroke="#c4c4c4" stroke-width="1.3" fill="none"><path d="M0 3H6M9 3H11M0 8H2M5 8H11M7.5 0.5V5.5M3.5 5.5V10.5"/></g></svg>
<svg class="a" style="left:1905.5px;top:367px" width="2" height="10" viewBox="0 0 2 10" ><rect x="0" y="0" width="2" height="2" fill="#c4c4c4"/><rect x="0" y="4" width="2" height="2" fill="#c4c4c4"/><rect x="0" y="8" width="2" height="2" fill="#c4c4c4"/></svg>
<div class="t c dim" style="left:1489px;top:387.5px;;">脚本</div>
<div class="fld" style="left:1653px;top:386px;width:263px;height:18px;background:#313131;border-color:#2a2a2a"></div>
<svg class="a" style="left:1657.5px;top:390px" width="8" height="10" viewBox="0 0 8 10" ><path d="M0.5 0.5H5.5L7.5 2.5V9.5H0.5Z" fill="#9a9a9a"/><path d="M3 3L2.6 7.5M5 3L4.6 7.5M1.8 4.4H6M1.6 6.2H5.8" stroke="#4c7a4c" stroke-width="0.7"/></svg>
<div class="t dim" style="left:1668.5px;top:387px;;letter-spacing:0.21px;">Connector</div>
<svg class="a" style="left:1900.5px;top:389.5px" width="11" height="11" viewBox="0 0 11 11" ><circle cx="5.5" cy="5.5" r="4.6" fill="none" stroke="#8a8a8a" stroke-width="1.1"/><circle cx="5.5" cy="5.5" r="1.7" fill="#8a8a8a"/></svg>
<div class="t c b" style="left:1489px;top:416px;;">连接器位置</div>
<div class="t " style="left:1489px;top:433.5px;;letter-spacing:0.26px;">Connector Position</div>
<div class="dd" style="left:1653px;top:434px;width:263px;height:16px"></div>
<div class="t c" style="left:1657px;top:434px;;">顶部</div>
<svg class="a" style="left:1901.5px;top:440.0px" width="8" height="5" viewBox="0 0 8 5" ><path d="M0 0.5H8L4 4.5Z" fill="#c4c4c4"/></svg>
<div class="t c b" style="left:1489px;top:463px;;">连接器所属建筑类型</div>
<div class="t " style="left:1489px;top:480.5px;;letter-spacing:0.22px;">Connector Parent Type</div>
<div class="dd" style="left:1653px;top:481px;width:263px;height:16px"></div>
<div class="t " style="left:1657px;top:480.5px;;letter-spacing:0.29px;">Wall</div>
<svg class="a" style="left:1901.5px;top:487.0px" width="8" height="5" viewBox="0 0 8 5" ><path d="M0 0.5H8L4 4.5Z" fill="#c4c4c4"/></svg>
<div class="a" style="left:1470px;top:506px;width:450px;height:1px;background:#1a1a1a"></div>
<div class="a" style="left:1470px;top:507px;width:450px;height:54px;background:#3c3c3c"></div>
<div class="a" style="left:1470px;top:561px;width:450px;height:1px;background:#1a1a1a"></div>
<div class="a" style="left:1470px;top:572px;width:450px;height:1px;background:#1a1a1a"></div>
<div class="a" style="left:1485.5px;top:512.5px;width:32px;height:32px;background:#414141"></div>
<div class="a" style="left:1486.5px;top:513.5px;width:30px;height:30px;border-radius:15px;background:radial-gradient(circle at 42% 32%,#e4e4e4 0%,#bdbdbd 35%,#8a8a8a 70%,#5c5c5c 100%)"></div>
<div class="t " style="left:1526px;top:512.5px;font-size:13.5px;letter-spacing:.45px;color:#b4b4b4;letter-spacing:0.28px;">Default-Material (Material)</div>
<svg class="a" style="left:1890.0px;top:514.5px" width="11" height="11" viewBox="0 0 11 11" ><circle cx="5.5" cy="5.5" r="5.3" fill="#c4c4c4"/><text x="5.5" y="9" font-size="9" font-weight="bold" text-anchor="middle" fill="#3c3c3c" font-family="Liberation Sans,sans-serif" letter-spacing="0">?</text></svg>
<svg class="a" style="left:1910.5px;top:515px" width="2" height="10" viewBox="0 0 2 10" ><rect x="0" y="0" width="2" height="2" fill="#c4c4c4"/><rect x="0" y="4" width="2" height="2" fill="#c4c4c4"/><rect x="0" y="8" width="2" height="2" fill="#c4c4c4"/></svg>
<svg class="a" style="left:1477.5px;top:545.5px" width="8" height="9" viewBox="0 0 8 9" ><path d="M0.3 0V9L7.8 4.5Z" fill="#6e6e6e"/></svg>
<div class="t " style="left:1523px;top:537.5px;font-size:13px;color:#989898;letter-spacing:-0.24px;">Shader</div>
<div class="dd" style="left:1574px;top:538px;width:293px;height:16px;background:#464646;border-color:#343434"></div>
<div class="t " style="left:1577.5px;top:537.5px;font-size:13px;color:#a2a2a2;letter-spacing:-0.10px;">Standard</div>
<svg class="a" style="left:1854px;top:543.5px" width="8" height="5" viewBox="0 0 8 5" ><path d="M0 0.5H8L4 4.5Z" fill="#7a7a7a"/></svg>
<div class="a" style="left:1872px;top:537px;width:43px;height:16px;background:#4a4a4a;border-radius:3px"></div>
<div class="t " style="left:1877px;top:536.5px;font-size:13px;color:#a8a8a8;letter-spacing:-0.49px;">Edit...</div>
<div class="a" style="left:1580px;top:582px;width:230px;height:22.5px;background:#585858;border:1px solid #303030;border-radius:3px"></div>
<div class="t c" style="left:1671px;top:585.5px;color:#e4e4e4;">添加组件</div></div>
</body></html>
